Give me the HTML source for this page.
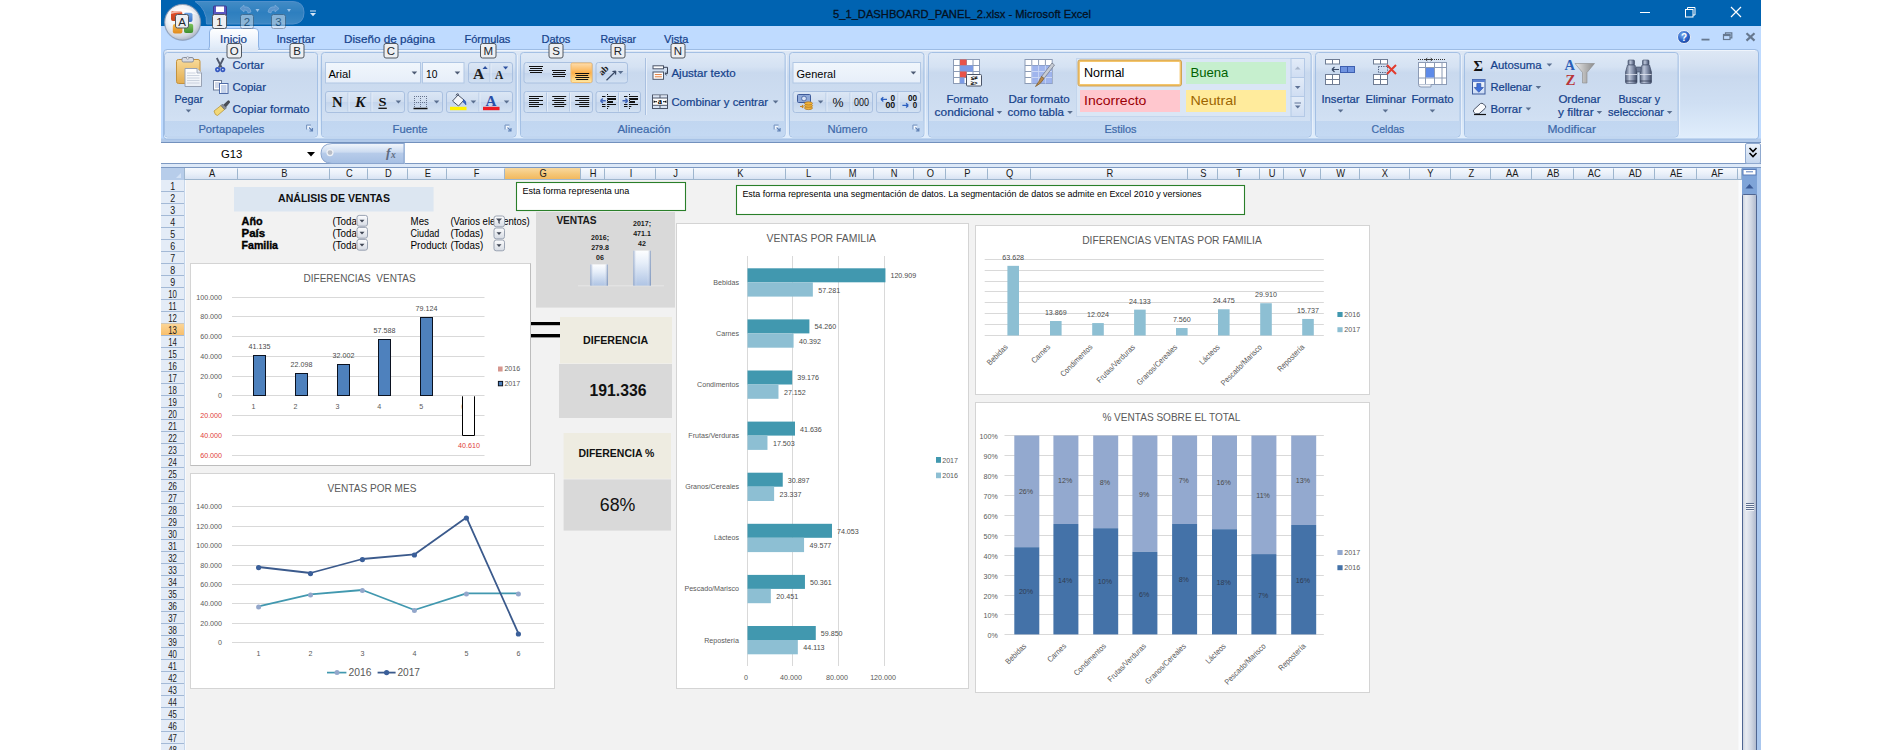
<!DOCTYPE html>
<html lang="es"><head><meta charset="utf-8"><title>5_1_DASHBOARD_PANEL_2.xlsx - Microsoft Excel</title>
<style>
html,body{margin:0;padding:0;background:#fff;}
body{width:1900px;height:750px;overflow:hidden;position:relative;}
svg{position:absolute;left:0;top:0;display:block;font-family:"Liberation Sans",sans-serif;}
text{white-space:pre;}
</style></head><body>
<svg width="1900" height="750" viewBox="0 0 1900 750">
<defs>
<linearGradient id="gTabRow" x1="0" y1="0" x2="0" y2="1"><stop offset="0" stop-color="#C3DCFB"/><stop offset="1" stop-color="#BBD6F8"/></linearGradient>
<linearGradient id="gQat" x1="0" y1="0" x2="0" y2="1"><stop offset="0" stop-color="#FFFFFF" stop-opacity="0.26"/><stop offset="0.5" stop-color="#FFFFFF" stop-opacity="0.18"/><stop offset="1" stop-color="#FFFFFF" stop-opacity="0.24"/></linearGradient>
<radialGradient id="gOrb" cx="0.42" cy="0.35" r="0.68"><stop offset="0" stop-color="#FFFFFF"/><stop offset="0.5" stop-color="#F1F3F7"/><stop offset="0.8" stop-color="#D2D7E0"/><stop offset="1" stop-color="#A9B2C2"/></radialGradient>
<linearGradient id="gLg1" x1="0" y1="0" x2="0" y2="1"><stop offset="0" stop-color="#E8502A"/><stop offset="1" stop-color="#C2441E"/></linearGradient>
<linearGradient id="gLg2" x1="0" y1="0" x2="0" y2="1"><stop offset="0" stop-color="#F6B84A"/><stop offset="1" stop-color="#E08A1E"/></linearGradient>
<linearGradient id="gLg3" x1="0" y1="0" x2="0" y2="1"><stop offset="0" stop-color="#7CC35A"/><stop offset="1" stop-color="#3F8F2E"/></linearGradient>
<linearGradient id="gLg4" x1="0" y1="0" x2="0" y2="1"><stop offset="0" stop-color="#6FA8E8"/><stop offset="1" stop-color="#3A6FC4"/></linearGradient>
<linearGradient id="gTabAct" x1="0" y1="0" x2="0" y2="1"><stop offset="0" stop-color="#FFFFFF"/><stop offset="0.5" stop-color="#EEF4FC"/><stop offset="1" stop-color="#DCE8F7"/></linearGradient>
<radialGradient id="gHelp" cx="0.4" cy="0.35" r="0.7"><stop offset="0" stop-color="#7FB2F0"/><stop offset="0.6" stop-color="#2A62C8"/><stop offset="1" stop-color="#1B3F94"/></radialGradient>
<linearGradient id="gFx" x1="0" y1="0" x2="0" y2="1"><stop offset="0" stop-color="#F3F7FC"/><stop offset="0.42" stop-color="#CDDCF1"/><stop offset="0.5" stop-color="#B6CBE9"/><stop offset="1" stop-color="#A6BFE3"/></linearGradient>
<linearGradient id="gBtn" x1="0" y1="0" x2="0" y2="1"><stop offset="0" stop-color="#EDF3FB"/><stop offset="1" stop-color="#C4D6EE"/></linearGradient>
<linearGradient id="gRib" x1="0" y1="0" x2="0" y2="1"><stop offset="0" stop-color="#DEE8F5"/><stop offset="0.14" stop-color="#D6E2F2"/><stop offset="0.3" stop-color="#C9D9EE"/><stop offset="0.6" stop-color="#CFDFF3"/><stop offset="1" stop-color="#E1EEFC"/></linearGradient>
<linearGradient id="gGrp" x1="0" y1="0" x2="0" y2="1"><stop offset="0" stop-color="#DFE9F6"/><stop offset="0.17" stop-color="#D5E2F3"/><stop offset="0.24" stop-color="#C9D9EE"/><stop offset="0.75" stop-color="#D0DFF2"/><stop offset="1" stop-color="#D8E6F7"/></linearGradient>
<linearGradient id="gGrpLbl" x1="0" y1="0" x2="0" y2="1"><stop offset="0" stop-color="#C1D6F0"/><stop offset="1" stop-color="#C4D9F3"/></linearGradient>
<linearGradient id="gClip" x1="0" y1="0" x2="0" y2="1"><stop offset="0" stop-color="#F8DA98"/><stop offset="1" stop-color="#E3AD50"/></linearGradient>
<linearGradient id="gPaper" x1="0" y1="0" x2="0" y2="1"><stop offset="0" stop-color="#FFFFFF"/><stop offset="1" stop-color="#E9EEF6"/></linearGradient>
<linearGradient id="gBox" x1="0" y1="0" x2="0" y2="1"><stop offset="0" stop-color="#F1F6FC"/><stop offset="1" stop-color="#E6EEF9"/></linearGradient>
<linearGradient id="gBtnRow" x1="0" y1="0" x2="0" y2="1"><stop offset="0" stop-color="#DCE7F5"/><stop offset="0.5" stop-color="#CFDDF0"/><stop offset="0.52" stop-color="#C4D5EC"/><stop offset="1" stop-color="#D4E2F3"/></linearGradient>
<linearGradient id="gOrange" x1="0" y1="0" x2="0" y2="1"><stop offset="0" stop-color="#FDDDAE"/><stop offset="0.35" stop-color="#FCBE6A"/><stop offset="0.5" stop-color="#FBAE4A"/><stop offset="0.8" stop-color="#FDD27E"/><stop offset="1" stop-color="#FEE9A6"/></linearGradient>
<linearGradient id="gScr" x1="0" y1="0" x2="0" y2="1"><stop offset="0" stop-color="#E3ECF8"/><stop offset="1" stop-color="#CFDDF2"/></linearGradient>
<linearGradient id="gFill" x1="0" y1="0" x2="0" y2="1"><stop offset="0" stop-color="#FFFFFF"/><stop offset="1" stop-color="#C9DAF5"/></linearGradient>
<linearGradient id="gFunnel" x1="0" y1="0" x2="1" y2="0"><stop offset="0" stop-color="#E8E8E8"/><stop offset="0.5" stop-color="#B8B8B8"/><stop offset="1" stop-color="#8C8C8C"/></linearGradient>
<linearGradient id="gBino" x1="0" y1="0" x2="1" y2="0"><stop offset="0" stop-color="#55627C"/><stop offset="0.35" stop-color="#BAC4D8"/><stop offset="0.6" stop-color="#8C98B2"/><stop offset="1" stop-color="#3E4A64"/></linearGradient>
<linearGradient id="gColH" x1="0" y1="0" x2="0" y2="1"><stop offset="0" stop-color="#F7FAFE"/><stop offset="0.5" stop-color="#E9F0F9"/><stop offset="1" stop-color="#D5E1F2"/></linearGradient>
<linearGradient id="gColSel" x1="0" y1="0" x2="0" y2="1"><stop offset="0" stop-color="#F9D99F"/><stop offset="0.5" stop-color="#F5C778"/><stop offset="1" stop-color="#F1B65A"/></linearGradient>
<linearGradient id="gRowSel" x1="0" y1="0" x2="0" y2="1"><stop offset="0" stop-color="#FBD597"/><stop offset="1" stop-color="#F8BE6A"/></linearGradient>
<linearGradient id="gThumb" x1="0" y1="0" x2="1" y2="0"><stop offset="0" stop-color="#C9D0DC"/><stop offset="0.25" stop-color="#E9ECF2"/><stop offset="0.6" stop-color="#D3D9E5"/><stop offset="1" stop-color="#AEB8CC"/></linearGradient>
<linearGradient id="gPv" x1="0" y1="0" x2="0" y2="1"><stop offset="0" stop-color="#FDFDFE"/><stop offset="1" stop-color="#D5DAE3"/></linearGradient>
<linearGradient id="gMini" x1="0" y1="0" x2="0" y2="1"><stop offset="0" stop-color="#FDFEFF"/><stop offset="0.35" stop-color="#E6EEF9"/><stop offset="1" stop-color="#AFC4E4"/></linearGradient>
<linearGradient id="gMiniH" x1="0" y1="0" x2="1" y2="0"><stop offset="0" stop-color="#6F8AB8" stop-opacity="0.7"/><stop offset="0.2" stop-color="#FFFFFF" stop-opacity="0"/><stop offset="0.78" stop-color="#FFFFFF" stop-opacity="0"/><stop offset="1" stop-color="#5F7AA8" stop-opacity="0.75"/></linearGradient>
</defs>
<g id="titlebar">
<rect x="161" y="0" width="1600" height="26" fill="#0063B1"/>
<rect x="161" y="26" width="1600" height="24" fill="#BFDBFF"/>
<path d="M195 1.5 H293 Q304 2 304 12.5 Q304 23.5 293 24 H206.5 A24 24 0 0 0 195 1.5 Z" fill="url(#gQat)" stroke="#4F8FCB" stroke-width="1"/>
<circle cx="182.6" cy="22.4" r="18.6" fill="#7F98BE" opacity="0.5"/>
<circle cx="182.6" cy="22.3" r="17.8" fill="url(#gOrb)" stroke="#8C99AE" stroke-width="0.8"/>
<rect x="171" y="11" width="11.3" height="10" fill="url(#gLg1)" rx="2"/>
<rect x="184" y="12.5" width="8.5" height="9.5" fill="url(#gLg4)" rx="2"/>
<rect x="172.8" y="24" width="9.6" height="9.6" fill="url(#gLg2)" rx="2"/>
<rect x="184" y="23.7" width="9.2" height="9.2" fill="url(#gLg3)" rx="2"/>
<path d="M167 15 Q182.6 3 198 15 Q182.6 9.5 167 15 Z" fill="#FFFFFF" opacity="0.6"/>
<rect x="213.5" y="6" width="13" height="10" fill="#5C58C2" stroke="#3D3A8C" stroke-width="1" rx="1"/>
<rect x="216" y="6.5" width="8" height="5.5" fill="#FFFFFF"/>
<path d="M251 12 Q250 6 244 7 L244 5 L240 8.5 L244 12 L244 10 Q248 9.5 248 13 Z" fill="#5D95CC" stroke="#86B3DE" stroke-width="0.6"/>
<path d="M255.5 9 l2 3 l2 -3 Z" fill="#9CC3E8"/>
<path d="M268 12 Q269 6 275 7 L275 5 L279 8.5 L275 12 L275 10 Q271 9.5 271 13 Z" fill="#5D95CC" stroke="#86B3DE" stroke-width="0.6"/>
<path d="M287 9 l2 3 l2 -3 Z" fill="#9CC3E8"/>
<line x1="310" y1="11" x2="316" y2="11" stroke="#D7E6F6" stroke-width="1"/>
<path d="M310 13 h6 l-3 3.2 Z" fill="#D7E6F6"/>
<text x="962" y="18.22" font-size="11.8" fill="#04101E" text-anchor="middle" textLength="258" lengthAdjust="spacingAndGlyphs" stroke="#04101E" stroke-width="0.3">5_1_DASHBOARD_PANEL_2.xlsx - Microsoft Excel</text>
<line x1="1640" y1="12.5" x2="1650" y2="12.5" stroke="#FFFFFF" stroke-width="1"/>
<rect x="1685.5" y="9.5" width="7.5" height="7.5" fill="none" stroke="#FFFFFF" stroke-width="1"/>
<path d="M1687.5 9.5 V7.5 H1695 V15 H1693" fill="none" stroke="#FFFFFF" stroke-width="1"/>
<path d="M1731 7 L1741 17 M1741 7 L1731 17" fill="none" stroke="#FFFFFF" stroke-width="1.2"/>
</g>
<g id="tabs">
<path d="M207 50 Q209.5 49.5 209.5 46 V32 Q209.5 28.5 213 28.5 H255 Q258.5 28.5 258.5 32 V46 Q258.5 49.5 261 50 Z" fill="url(#gTabAct)" stroke="#8DB2E3" stroke-width="1"/>
<text x="220" y="43.08" font-size="11.4" fill="#15428B" textLength="27" lengthAdjust="spacingAndGlyphs" stroke="#15428B" stroke-width="0.22">Inicio</text>
<text x="276.4" y="43.08" font-size="11.4" fill="#15428B" textLength="38.6" lengthAdjust="spacingAndGlyphs" stroke="#15428B" stroke-width="0.22">Insertar</text>
<text x="344" y="43.08" font-size="11.4" fill="#15428B" textLength="91" lengthAdjust="spacingAndGlyphs" stroke="#15428B" stroke-width="0.22">Diseño de página</text>
<text x="464.4" y="43.08" font-size="11.4" fill="#15428B" textLength="46" lengthAdjust="spacingAndGlyphs" stroke="#15428B" stroke-width="0.22">Fórmulas</text>
<text x="541.4" y="43.08" font-size="11.4" fill="#15428B" textLength="29" lengthAdjust="spacingAndGlyphs" stroke="#15428B" stroke-width="0.22">Datos</text>
<text x="600.4" y="43.08" font-size="11.4" fill="#15428B" textLength="35.6" lengthAdjust="spacingAndGlyphs" stroke="#15428B" stroke-width="0.22">Revisar</text>
<text x="664" y="43.08" font-size="11.4" fill="#15428B" textLength="24.4" lengthAdjust="spacingAndGlyphs" stroke="#15428B" stroke-width="0.22">Vista</text>
<circle cx="1684" cy="37" r="6.5" fill="url(#gHelp)" stroke="#E8F0FA" stroke-width="1"/>
<text x="1684" y="40.78" font-size="10" fill="#FFFFFF" text-anchor="middle" font-weight="bold">?</text>
<line x1="1701.5" y1="39.6" x2="1709.5" y2="39.6" stroke="#66788F" stroke-width="1.8"/>
<rect x="1723.5" y="34.5" width="6.5" height="5" fill="none" stroke="#66788F" stroke-width="1.2"/>
<path d="M1725.5 34.5 V32.8 H1731.8 V37.8 H1730" fill="none" stroke="#66788F" stroke-width="1.2"/>
<line x1="1723" y1="35.3" x2="1730.5" y2="35.3" stroke="#66788F" stroke-width="1.6"/>
<path d="M1746.5 33.3 L1754.5 40.6 M1754.5 33.3 L1746.5 40.6" fill="none" stroke="#66788F" stroke-width="2.2"/>
</g>
<g id="formulabar">
<rect x="161" y="143" width="1600" height="25" fill="#C4DAF5"/>
<rect x="161" y="143" width="1600" height="21" fill="#FFFFFF"/>
<line x1="161" y1="142.5" x2="1761" y2="142.5" stroke="#7391BD" stroke-width="1"/>
<line x1="161" y1="163.5" x2="1761" y2="163.5" stroke="#7D99C2" stroke-width="1"/>
<rect x="161" y="164" width="1600" height="4" fill="#DDE9F8"/>
<line x1="161" y1="167.5" x2="1761" y2="167.5" stroke="#7D99C2" stroke-width="1"/>
<text x="221" y="157.58" font-size="11.4" fill="#000" textLength="21.4" lengthAdjust="spacingAndGlyphs">G13</text>
<path d="M307 152 h8 l-4 4.5 Z" fill="#000"/>
<path d="M404 143.5 H332 Q321 144 321 153.5 Q321 163 332 163.5 H404 Z" fill="url(#gFx)" stroke="#8AA5CE" stroke-width="1"/>
<line x1="404.5" y1="143" x2="404.5" y2="164" stroke="#9FB8DA" stroke-width="1"/>
<circle cx="330" cy="152.6" r="3" fill="#B9BEC8" stroke="#EEF1F6" stroke-width="1.2"/>
<text x="386" y="157" font-size="13.5" fill="#5F6B80" font-weight="bold" font-style="italic" font-family="'Liberation Serif', serif">f</text>
<text x="391" y="158" font-size="9.5" fill="#5F6B80" font-weight="bold" font-style="italic" font-family="'Liberation Serif', serif">x</text>
<rect x="1745.5" y="143.5" width="15" height="20" fill="url(#gBtn)" stroke="#8FA9CF" stroke-width="1" rx="1.5"/>
<path d="M1749.5 148 l3.5 3.5 l3.5 -3.5 M1749.5 153 l3.5 3.5 l3.5 -3.5" fill="none" stroke="#000" stroke-width="1.6"/>
</g>
<g id="ribbon">
<rect x="161" y="50" width="1600" height="89" fill="#BFDBFF"/>
<rect x="161" y="138.5" width="1600" height="3.5" fill="#B1C9E9"/>
<path d="M163.5 136 V53 Q163.5 49.5 167 49.5 H1755 Q1758.5 49.5 1758.5 53 V136 Q1758.5 139 1755.5 139 H166.5 Q163.5 139 163.5 136 Z" fill="url(#gRib)" stroke="#9DBCE4" stroke-width="1"/>
<line x1="167" y1="50.5" x2="1755" y2="50.5" stroke="#EEF4FC" stroke-width="1"/>
<rect x="210" y="48.5" width="48" height="2.5" fill="#DEE8F5"/>
<rect x="164.5" y="52.5" width="153" height="84.5" fill="url(#gGrp)" stroke="#A4C0E4" stroke-width="1" rx="3"/>
<path d="M165 121 H317 V134 Q317 136.5 314.5 136.5 H167.5 Q165 136.5 165 134 Z" fill="url(#gGrpLbl)"/>
<line x1="319" y1="55" x2="319" y2="135" stroke="#E9F1FB" stroke-width="1"/>
<text x="198.4" y="132.88" font-size="11.4" fill="#3E6AAA" textLength="66" lengthAdjust="spacingAndGlyphs" stroke="#3E6AAA" stroke-width="0.22">Portapapeles</text>
<path d="M306.5 129.5 V125 H311" fill="none" stroke="#7A96C0" stroke-width="1"/>
<rect x="307.5" y="126" width="3" height="3" fill="#F4F8FD"/>
<path d="M309 127.5 l3 3 M312.5 128 V131 H309.5" fill="none" stroke="#5F80B4" stroke-width="1.1"/>
<rect x="321.5" y="52.5" width="194.5" height="84.5" fill="url(#gGrp)" stroke="#A4C0E4" stroke-width="1" rx="3"/>
<path d="M322 121 H515.5 V134 Q515.5 136.5 513 136.5 H324.5 Q322 136.5 322 134 Z" fill="url(#gGrpLbl)"/>
<line x1="517.5" y1="55" x2="517.5" y2="135" stroke="#E9F1FB" stroke-width="1"/>
<text x="392.6" y="132.88" font-size="11.4" fill="#3E6AAA" textLength="35" lengthAdjust="spacingAndGlyphs" stroke="#3E6AAA" stroke-width="0.22">Fuente</text>
<path d="M505 129.5 V125 H509.5" fill="none" stroke="#7A96C0" stroke-width="1"/>
<rect x="506" y="126" width="3" height="3" fill="#F4F8FD"/>
<path d="M507.5 127.5 l3 3 M511 128 V131 H508" fill="none" stroke="#5F80B4" stroke-width="1.1"/>
<rect x="520.5" y="52.5" width="264.6" height="84.5" fill="url(#gGrp)" stroke="#A4C0E4" stroke-width="1" rx="3"/>
<path d="M521 121 H784.6 V134 Q784.6 136.5 782.1 136.5 H523.5 Q521 136.5 521 134 Z" fill="url(#gGrpLbl)"/>
<line x1="786.6" y1="55" x2="786.6" y2="135" stroke="#E9F1FB" stroke-width="1"/>
<text x="617.4" y="132.88" font-size="11.4" fill="#3E6AAA" textLength="53.2" lengthAdjust="spacingAndGlyphs" stroke="#3E6AAA" stroke-width="0.22">Alineación</text>
<path d="M774.1 129.5 V125 H778.6" fill="none" stroke="#7A96C0" stroke-width="1"/>
<rect x="775.1" y="126" width="3" height="3" fill="#F4F8FD"/>
<path d="M776.6 127.5 l3 3 M780.1 128 V131 H777.1" fill="none" stroke="#5F80B4" stroke-width="1.1"/>
<rect x="789.5" y="52.5" width="134.4" height="84.5" fill="url(#gGrp)" stroke="#A4C0E4" stroke-width="1" rx="3"/>
<path d="M790 121 H923.4 V134 Q923.4 136.5 920.9 136.5 H792.5 Q790 136.5 790 134 Z" fill="url(#gGrpLbl)"/>
<line x1="925.4" y1="55" x2="925.4" y2="135" stroke="#E9F1FB" stroke-width="1"/>
<text x="827.4" y="132.88" font-size="11.4" fill="#3E6AAA" textLength="40" lengthAdjust="spacingAndGlyphs" stroke="#3E6AAA" stroke-width="0.22">Número</text>
<path d="M912.9 129.5 V125 H917.4" fill="none" stroke="#7A96C0" stroke-width="1"/>
<rect x="913.9" y="126" width="3" height="3" fill="#F4F8FD"/>
<path d="M915.4 127.5 l3 3 M918.9 128 V131 H915.9" fill="none" stroke="#5F80B4" stroke-width="1.1"/>
<rect x="928.5" y="52.5" width="382.6" height="84.5" fill="url(#gGrp)" stroke="#A4C0E4" stroke-width="1" rx="3"/>
<path d="M929 121 H1310.6 V134 Q1310.6 136.5 1308.1 136.5 H931.5 Q929 136.5 929 134 Z" fill="url(#gGrpLbl)"/>
<line x1="1312.6" y1="55" x2="1312.6" y2="135" stroke="#E9F1FB" stroke-width="1"/>
<text x="1104.4" y="132.88" font-size="11.4" fill="#3E6AAA" textLength="32.2" lengthAdjust="spacingAndGlyphs" stroke="#3E6AAA" stroke-width="0.22">Estilos</text>
<rect x="1315.5" y="52.5" width="144.6" height="84.5" fill="url(#gGrp)" stroke="#A4C0E4" stroke-width="1" rx="3"/>
<path d="M1316 121 H1459.6 V134 Q1459.6 136.5 1457.1 136.5 H1318.5 Q1316 136.5 1316 134 Z" fill="url(#gGrpLbl)"/>
<line x1="1461.6" y1="55" x2="1461.6" y2="135" stroke="#E9F1FB" stroke-width="1"/>
<text x="1371.6" y="132.88" font-size="11.4" fill="#3E6AAA" textLength="32.8" lengthAdjust="spacingAndGlyphs" stroke="#3E6AAA" stroke-width="0.22">Celdas</text>
<rect x="1464.5" y="52.5" width="213.6" height="84.5" fill="url(#gGrp)" stroke="#A4C0E4" stroke-width="1" rx="3"/>
<path d="M1465 121 H1677.6 V134 Q1677.6 136.5 1675.1 136.5 H1467.5 Q1465 136.5 1465 134 Z" fill="url(#gGrpLbl)"/>
<line x1="1679.6" y1="55" x2="1679.6" y2="135" stroke="#E9F1FB" stroke-width="1"/>
<text x="1547.4" y="132.88" font-size="11.4" fill="#3E6AAA" textLength="48.6" lengthAdjust="spacingAndGlyphs" stroke="#3E6AAA" stroke-width="0.22">Modificar</text>
<rect x="176.5" y="59.5" width="23.5" height="24" fill="url(#gClip)" stroke="#C4923E" stroke-width="1" rx="2"/>
<rect x="182" y="57.5" width="11.5" height="4.5" fill="#D9DCE3" stroke="#8A8F9C" stroke-width="1" rx="1.5"/>
<circle cx="187.7" cy="58" r="1.3" fill="#F4F4F6" stroke="#8A8F9C" stroke-width="0.7"/>
<path d="M185 68.5 H197 L201.5 73 V86.5 H185 Z" fill="url(#gPaper)" stroke="#98A2B4" stroke-width="1"/>
<path d="M197 68.5 V73 H201.5" fill="#E2E7F0" stroke="#98A2B4" stroke-width="0.8"/>
<line x1="187" y1="73" x2="195.5" y2="73" stroke="#C2CAD8" stroke-width="0.8"/>
<line x1="187" y1="75.5" x2="199.5" y2="75.5" stroke="#C2CAD8" stroke-width="0.8"/>
<line x1="187" y1="78" x2="199.5" y2="78" stroke="#C2CAD8" stroke-width="0.8"/>
<line x1="187" y1="80.5" x2="199.5" y2="80.5" stroke="#C2CAD8" stroke-width="0.8"/>
<line x1="187" y1="83" x2="199.5" y2="83" stroke="#C2CAD8" stroke-width="0.8"/>
<text x="174.4" y="102.98" font-size="11.4" fill="#15428B" textLength="28.6" lengthAdjust="spacingAndGlyphs" stroke="#15428B" stroke-width="0.22">Pegar</text>
<path d="M185.7 109.6 h5.6 l-2.8 3 Z" fill="#5A6F90"/>
<path d="M216.8 58 L221.6 67.5 M223.6 58 L218.8 67.5" fill="none" stroke="#4F586C" stroke-width="1.8"/>
<circle cx="217.6" cy="69.6" r="1.7" fill="none" stroke="#3558C0" stroke-width="1.7"/>
<circle cx="222.8" cy="69.6" r="1.7" fill="none" stroke="#3558C0" stroke-width="1.7"/>
<text x="232.4" y="68.78" font-size="11.4" fill="#15428B" textLength="31.6" lengthAdjust="spacingAndGlyphs" stroke="#15428B" stroke-width="0.22">Cortar</text>
<rect x="213.5" y="80.5" width="8" height="9.5" fill="#FFFFFF" stroke="#6C7C99" stroke-width="1"/>
<line x1="215" y1="83" x2="220" y2="83" stroke="#8AA0C6" stroke-width="0.8"/>
<line x1="215" y1="85" x2="220" y2="85" stroke="#8AA0C6" stroke-width="0.8"/>
<line x1="215" y1="87" x2="220" y2="87" stroke="#8AA0C6" stroke-width="0.8"/>
<rect x="219.5" y="83.5" width="8.5" height="10" fill="#FFFFFF" stroke="#4F6CA8" stroke-width="1"/>
<line x1="221" y1="86" x2="226.5" y2="86" stroke="#6F8FCB" stroke-width="0.8"/>
<line x1="221" y1="88" x2="226.5" y2="88" stroke="#6F8FCB" stroke-width="0.8"/>
<line x1="221" y1="90" x2="226.5" y2="90" stroke="#6F8FCB" stroke-width="0.8"/>
<line x1="221" y1="92" x2="226.5" y2="92" stroke="#6F8FCB" stroke-width="0.8"/>
<text x="232.4" y="90.98" font-size="11.4" fill="#15428B" textLength="33.6" lengthAdjust="spacingAndGlyphs" stroke="#15428B" stroke-width="0.22">Copiar</text>
<path d="M214 111 L221 105.5 L224.5 109.5 L217.5 115.5 Q215 115.5 214 111 Z" fill="#F2D878" stroke="#B8963C" stroke-width="0.8"/>
<path d="M221 105.5 L222.5 104 L226.5 108 L224.5 109.5 Z" fill="#8B8F98" stroke="#60646E" stroke-width="0.6"/>
<path d="M223.8 104.8 L228 100.8 Q229.8 100.2 229.5 102.5 L226 106.8 Z" fill="#4A4E58" stroke="#2E3138" stroke-width="0.6"/>
<text x="232.4" y="112.78" font-size="11.4" fill="#15428B" textLength="77.2" lengthAdjust="spacingAndGlyphs" stroke="#15428B" stroke-width="0.22">Copiar formato</text>
<rect x="325.5" y="62.5" width="95" height="20.5" fill="url(#gBox)" stroke="#B1C7E4" stroke-width="1"/>
<text x="328.4" y="77.68" font-size="11.4" fill="#000" textLength="22.4" lengthAdjust="spacingAndGlyphs">Arial</text>
<path d="M411.6 71.6 h5.6 l-2.8 3 Z" fill="#4D5B74"/>
<rect x="422.5" y="62.5" width="41.5" height="20.5" fill="url(#gBox)" stroke="#B1C7E4" stroke-width="1"/>
<text x="426" y="77.68" font-size="11.4" fill="#000" textLength="11.4" lengthAdjust="spacingAndGlyphs">10</text>
<path d="M454.6 71.6 h5.6 l-2.8 3 Z" fill="#4D5B74"/>
<rect x="468.5" y="62.5" width="44" height="20.5" fill="url(#gBtnRow)" stroke="#A9C0E0" stroke-width="1" rx="2.5"/>
<line x1="490" y1="63.5" x2="490" y2="82" stroke="#B4C8E4" stroke-width="1"/>
<line x1="491" y1="63.5" x2="491" y2="82" stroke="#E3ECF8" stroke-width="1"/>
<text x="473" y="78.8" font-size="15.5" fill="#1E1E1E" font-weight="bold" font-family="'Liberation Serif', serif">A</text>
<path d="M482.5 69 l2.6 -3 l2.6 3 Z" fill="#2B4F9E"/>
<text x="495" y="78.8" font-size="11.5" fill="#1E1E1E" font-weight="bold" font-family="'Liberation Serif', serif">A</text>
<path d="M503 66.5 h5.2 l-2.6 3 Z" fill="#2B4F9E"/>
<rect x="325.5" y="91.5" width="79" height="21" fill="url(#gBtnRow)" stroke="#A9C0E0" stroke-width="1" rx="2.5"/>
<line x1="348" y1="92.5" x2="348" y2="111.5" stroke="#B4C8E4" stroke-width="1"/>
<line x1="349" y1="92.5" x2="349" y2="111.5" stroke="#E3ECF8" stroke-width="1"/>
<line x1="371" y1="92.5" x2="371" y2="111.5" stroke="#B4C8E4" stroke-width="1"/>
<line x1="372" y1="92.5" x2="372" y2="111.5" stroke="#E3ECF8" stroke-width="1"/>
<text x="332" y="106.5" font-size="14.5" fill="#111" font-weight="bold" font-family="'Liberation Serif', serif" textLength="10.6" lengthAdjust="spacingAndGlyphs">N</text>
<text x="355" y="106.5" font-size="14.5" fill="#111" font-weight="bold" font-style="italic" font-family="'Liberation Serif', serif" textLength="10.5" lengthAdjust="spacingAndGlyphs">K</text>
<text x="378.6" y="106" font-size="13.5" fill="#111" font-weight="bold" font-family="'Liberation Serif', serif" textLength="8" lengthAdjust="spacingAndGlyphs">S</text>
<line x1="378.4" y1="108.3" x2="386.8" y2="108.3" stroke="#111" stroke-width="1.3"/>
<path d="M395.6 100.6 h5.6 l-2.8 3 Z" fill="#5A6F90"/>
<rect x="408" y="91.5" width="34.5" height="21" fill="url(#gBtnRow)" stroke="#A9C0E0" stroke-width="1" rx="2.5"/>
<line x1="414.5" y1="96" x2="414.5" y2="108" stroke="#66738C" stroke-width="1" stroke-dasharray="1 1"/>
<line x1="420.5" y1="96" x2="420.5" y2="108" stroke="#66738C" stroke-width="1" stroke-dasharray="1 1"/>
<line x1="426.5" y1="96" x2="426.5" y2="108" stroke="#66738C" stroke-width="1" stroke-dasharray="1 1"/>
<line x1="414" y1="96.5" x2="427" y2="96.5" stroke="#66738C" stroke-width="1" stroke-dasharray="1 1"/>
<line x1="414" y1="102.5" x2="427" y2="102.5" stroke="#66738C" stroke-width="1" stroke-dasharray="1 1"/>
<line x1="413.5" y1="108.5" x2="427.5" y2="108.5" stroke="#111" stroke-width="1.5"/>
<path d="M433.8 100.6 h5.6 l-2.8 3 Z" fill="#5A6F90"/>
<rect x="446.5" y="91.5" width="66" height="21" fill="url(#gBtnRow)" stroke="#A9C0E0" stroke-width="1" rx="2.5"/>
<line x1="479" y1="92.5" x2="479" y2="111.5" stroke="#B4C8E4" stroke-width="1"/>
<line x1="480" y1="92.5" x2="480" y2="111.5" stroke="#E3ECF8" stroke-width="1"/>
<path d="M452.5 101 L458 95 L464 100 L458.5 106 Z" fill="#F4F6FA" stroke="#4A5468" stroke-width="1"/>
<path d="M456 95.5 Q456.5 92.5 459 94.5" fill="none" stroke="#4A5468" stroke-width="1"/>
<path d="M463.5 99.5 Q466.5 100.5 466 105 Q464.5 103 463 102 Z" fill="#3465C8" stroke="#2A4FA0" stroke-width="0.5"/>
<rect x="450" y="106.8" width="16.5" height="3.4" fill="#FFF200"/>
<path d="M470.6 100.6 h5.6 l-2.8 3 Z" fill="#5A6F90"/>
<text x="485.5" y="106" font-size="15" fill="#2A4FA8" font-weight="bold" font-family="'Liberation Serif', serif" textLength="11" lengthAdjust="spacingAndGlyphs">A</text>
<rect x="483" y="106.8" width="16.5" height="3.4" fill="#EE1C25"/>
<path d="M503.8 100.6 h5.6 l-2.8 3 Z" fill="#5A6F90"/>
<rect x="524" y="62.5" width="68.5" height="20.5" fill="url(#gBtnRow)" stroke="#A9C0E0" stroke-width="1" rx="2.5"/>
<rect x="571" y="63" width="21" height="19.5" fill="url(#gOrange)" stroke="#F3BC6E" stroke-width="1" rx="1.5"/>
<line x1="529" y1="66.5" x2="543" y2="66.5" stroke="#111" stroke-width="1.05"/>
<line x1="530" y1="68.5" x2="542" y2="68.5" stroke="#111" stroke-width="1.05"/>
<line x1="529" y1="70.5" x2="543" y2="70.5" stroke="#111" stroke-width="1.05"/>
<line x1="530" y1="72.5" x2="542" y2="72.5" stroke="#111" stroke-width="1.05"/>
<line x1="552" y1="70.5" x2="566" y2="70.5" stroke="#111" stroke-width="1.05"/>
<line x1="553" y1="72.5" x2="565" y2="72.5" stroke="#111" stroke-width="1.05"/>
<line x1="552" y1="74.5" x2="566" y2="74.5" stroke="#111" stroke-width="1.05"/>
<line x1="553" y1="76.5" x2="565" y2="76.5" stroke="#111" stroke-width="1.05"/>
<line x1="575.2" y1="73.5" x2="589.2" y2="73.5" stroke="#111" stroke-width="1.05"/>
<line x1="576.2" y1="75.5" x2="588.2" y2="75.5" stroke="#111" stroke-width="1.05"/>
<line x1="575.2" y1="77.5" x2="589.2" y2="77.5" stroke="#111" stroke-width="1.05"/>
<line x1="576.2" y1="79.5" x2="588.2" y2="79.5" stroke="#111" stroke-width="1.05"/>
<rect x="596" y="62.5" width="31.5" height="20.5" fill="url(#gBtnRow)" stroke="#A9C0E0" stroke-width="1" rx="2.5"/>
<text x="602.2" y="76" font-size="9.5" fill="#222" font-weight="bold" font-family="'Liberation Serif', serif" transform="rotate(-45 602.2 76)">ab</text>
<path d="M606.5 80.2 L615.5 71.5 M615.8 71.2 l-3.4 0.3 M615.8 71.2 l-0.3 3.4" fill="none" stroke="#3A4A66" stroke-width="1.2"/>
<path d="M617.8 71.1 h5.6 l-2.8 3 Z" fill="#5A6F90"/>
<rect x="524" y="91.5" width="68.5" height="21" fill="url(#gBtnRow)" stroke="#A9C0E0" stroke-width="1" rx="2.5"/>
<line x1="546.5" y1="92.5" x2="546.5" y2="111.5" stroke="#B4C8E4" stroke-width="1"/>
<line x1="547.5" y1="92.5" x2="547.5" y2="111.5" stroke="#E3ECF8" stroke-width="1"/>
<line x1="569.5" y1="92.5" x2="569.5" y2="111.5" stroke="#B4C8E4" stroke-width="1"/>
<line x1="570.5" y1="92.5" x2="570.5" y2="111.5" stroke="#E3ECF8" stroke-width="1"/>
<line x1="529" y1="96.5" x2="543" y2="96.5" stroke="#111" stroke-width="1.05"/>
<line x1="529" y1="98.5" x2="539" y2="98.5" stroke="#111" stroke-width="1.05"/>
<line x1="529" y1="100.5" x2="543" y2="100.5" stroke="#111" stroke-width="1.05"/>
<line x1="529" y1="102.5" x2="539" y2="102.5" stroke="#111" stroke-width="1.05"/>
<line x1="529" y1="104.5" x2="543" y2="104.5" stroke="#111" stroke-width="1.05"/>
<line x1="529" y1="106.5" x2="539" y2="106.5" stroke="#111" stroke-width="1.05"/>
<line x1="552.2" y1="96.5" x2="566.2" y2="96.5" stroke="#111" stroke-width="1.05"/>
<line x1="554.2" y1="98.5" x2="564.2" y2="98.5" stroke="#111" stroke-width="1.05"/>
<line x1="552.2" y1="100.5" x2="566.2" y2="100.5" stroke="#111" stroke-width="1.05"/>
<line x1="554.2" y1="102.5" x2="564.2" y2="102.5" stroke="#111" stroke-width="1.05"/>
<line x1="552.2" y1="104.5" x2="566.2" y2="104.5" stroke="#111" stroke-width="1.05"/>
<line x1="554.2" y1="106.5" x2="564.2" y2="106.5" stroke="#111" stroke-width="1.05"/>
<line x1="575.2" y1="96.5" x2="589.2" y2="96.5" stroke="#111" stroke-width="1.05"/>
<line x1="579.2" y1="98.5" x2="589.2" y2="98.5" stroke="#111" stroke-width="1.05"/>
<line x1="575.2" y1="100.5" x2="589.2" y2="100.5" stroke="#111" stroke-width="1.05"/>
<line x1="579.2" y1="102.5" x2="589.2" y2="102.5" stroke="#111" stroke-width="1.05"/>
<line x1="575.2" y1="104.5" x2="589.2" y2="104.5" stroke="#111" stroke-width="1.05"/>
<line x1="579.2" y1="106.5" x2="589.2" y2="106.5" stroke="#111" stroke-width="1.05"/>
<rect x="596" y="91.5" width="44.5" height="21" fill="url(#gBtnRow)" stroke="#A9C0E0" stroke-width="1" rx="2.5"/>
<line x1="618.5" y1="92.5" x2="618.5" y2="111.5" stroke="#B4C8E4" stroke-width="1"/>
<line x1="619.5" y1="92.5" x2="619.5" y2="111.5" stroke="#E3ECF8" stroke-width="1"/>
<line x1="607.5" y1="96.5" x2="616" y2="96.5" stroke="#111" stroke-width="1.05"/>
<rect x="607.5" y="98" width="8.5" height="2" fill="#111"/>
<rect x="607.5" y="101" width="5.5" height="2" fill="#111"/>
<line x1="607.5" y1="104.5" x2="616" y2="104.5" stroke="#111" stroke-width="1.05"/>
<line x1="607.5" y1="106.5" x2="609.3" y2="106.5" stroke="#111" stroke-width="1.05"/>
<line x1="602" y1="96.5" x2="605.5" y2="96.5" stroke="#111" stroke-width="1.05"/>
<line x1="602" y1="104.5" x2="605.5" y2="104.5" stroke="#111" stroke-width="1.05"/>
<line x1="602" y1="106.5" x2="605.5" y2="106.5" stroke="#111" stroke-width="1.05"/>
<line x1="607.5" y1="94" x2="607.5" y2="109" stroke="#111" stroke-width="1" stroke-dasharray="1 1"/>
<path d="M605.7 100.7 h-5.2 m0 0 l2.3 -2.3 m-2.3 2.3 l2.3 2.3" fill="none" stroke="#3E63B8" stroke-width="1.4"/>
<line x1="629.5" y1="96.5" x2="638" y2="96.5" stroke="#111" stroke-width="1.05"/>
<rect x="629.5" y="98" width="8.5" height="2" fill="#111"/>
<rect x="629.5" y="101" width="5.5" height="2" fill="#111"/>
<line x1="629.5" y1="104.5" x2="638" y2="104.5" stroke="#111" stroke-width="1.05"/>
<line x1="629.5" y1="106.5" x2="631.3" y2="106.5" stroke="#111" stroke-width="1.05"/>
<line x1="624" y1="96.5" x2="627.5" y2="96.5" stroke="#111" stroke-width="1.05"/>
<line x1="624" y1="104.5" x2="627.5" y2="104.5" stroke="#111" stroke-width="1.05"/>
<line x1="624" y1="106.5" x2="627.5" y2="106.5" stroke="#111" stroke-width="1.05"/>
<line x1="629.5" y1="94" x2="629.5" y2="109" stroke="#111" stroke-width="1" stroke-dasharray="1 1"/>
<path d="M622.5 100.7 h5.2 m0 0 l-2.3 -2.3 m2.3 2.3 l-2.3 2.3" fill="none" stroke="#3E63B8" stroke-width="1.4"/>
<line x1="645.5" y1="58" x2="645.5" y2="115" stroke="#A9C0E0" stroke-width="1"/>
<line x1="646.5" y1="58" x2="646.5" y2="115" stroke="#E6EEF9" stroke-width="1"/>
<rect x="653" y="65.8" width="10.5" height="3" fill="#FFFFFF" stroke="#4A5468" stroke-width="1"/>
<path d="M663.5 67.3 H667.5 V73.6 H665.2 M666.6 72 l-1.7 1.6 l1.7 1.6" fill="none" stroke="#3A4458" stroke-width="1"/>
<rect x="653" y="72" width="10.5" height="7.3" fill="#FFFFFF" stroke="#4A5468" stroke-width="1"/>
<line x1="654.8" y1="74.6" x2="661.8" y2="74.6" stroke="#E07A3A" stroke-width="1"/>
<line x1="654.8" y1="76.8" x2="661.8" y2="76.8" stroke="#E07A3A" stroke-width="1"/>
<text x="671.4" y="76.78" font-size="11.4" fill="#15428B" textLength="64.2" lengthAdjust="spacingAndGlyphs" stroke="#15428B" stroke-width="0.22">Ajustar texto</text>
<rect x="652.5" y="95" width="15" height="13.5" fill="#FFFFFF" stroke="#4A5468" stroke-width="1"/>
<rect x="653" y="95.5" width="14" height="2.4" fill="#D9E4F4"/>
<rect x="653" y="105.6" width="14" height="2.4" fill="#D9E4F4"/>
<line x1="652.5" y1="98" x2="667.5" y2="98" stroke="#4A5468" stroke-width="1"/>
<line x1="652.5" y1="105.3" x2="667.5" y2="105.3" stroke="#4A5468" stroke-width="1"/>
<line x1="660" y1="95" x2="660" y2="98" stroke="#4A5468" stroke-width="1"/>
<line x1="660" y1="105.3" x2="660" y2="108.5" stroke="#4A5468" stroke-width="1"/>
<text x="660" y="104.4" font-size="8.6" fill="#000" text-anchor="middle" font-weight="bold" font-family="'Liberation Serif', serif">a</text>
<path d="M653.6 100.3 l2.4 1.4 l-2.4 1.4 Z M666.4 100.3 l-2.4 1.4 l2.4 1.4 Z" fill="#111"/>
<line x1="655.5" y1="101.7" x2="657" y2="101.7" stroke="#111" stroke-width="1"/>
<line x1="663" y1="101.7" x2="664.5" y2="101.7" stroke="#111" stroke-width="1"/>
<text x="671.4" y="105.78" font-size="11.4" fill="#15428B" textLength="96.6" lengthAdjust="spacingAndGlyphs" stroke="#15428B" stroke-width="0.22">Combinar y centrar</text>
<path d="M772.8 100.6 h5.6 l-2.8 3 Z" fill="#5A6F90"/>
<rect x="793" y="62.5" width="127.5" height="20.5" fill="url(#gBox)" stroke="#B1C7E4" stroke-width="1"/>
<text x="796.6" y="77.68" font-size="11.4" fill="#000" textLength="39" lengthAdjust="spacingAndGlyphs">General</text>
<path d="M910.6 71.6 h5.6 l-2.8 3 Z" fill="#4D5B74"/>
<rect x="793" y="91.5" width="79.5" height="21" fill="url(#gBtnRow)" stroke="#A9C0E0" stroke-width="1" rx="2.5"/>
<line x1="826" y1="92.5" x2="826" y2="111.5" stroke="#B4C8E4" stroke-width="1"/>
<line x1="827" y1="92.5" x2="827" y2="111.5" stroke="#E3ECF8" stroke-width="1"/>
<line x1="850" y1="92.5" x2="850" y2="111.5" stroke="#B4C8E4" stroke-width="1"/>
<line x1="851" y1="92.5" x2="851" y2="111.5" stroke="#E3ECF8" stroke-width="1"/>
<rect x="797.5" y="94.5" width="13" height="8" fill="#8FA9D8" stroke="#3D5A9A" stroke-width="1" rx="1"/>
<circle cx="804" cy="98.5" r="2.4" fill="#D8E3F6" stroke="#3D5A9A" stroke-width="0.8"/>
<ellipse cx="808.5" cy="108" rx="4" ry="1.6" fill="#F1B33B" stroke="#A8701A" stroke-width="0.7"/>
<ellipse cx="808.5" cy="105.7" rx="4" ry="1.6" fill="#F1B33B" stroke="#A8701A" stroke-width="0.7"/>
<ellipse cx="808.5" cy="103.4" rx="4" ry="1.6" fill="#F1B33B" stroke="#A8701A" stroke-width="0.7"/>
<path d="M800 106.5 h3.5 m0 0 l-1.5 -1.4 m1.5 1.4 l-1.5 1.4" fill="none" stroke="#C9851E" stroke-width="1.1"/>
<path d="M817.8 100.6 h5.6 l-2.8 3 Z" fill="#5A6F90"/>
<text x="838" y="106.85" font-size="13" fill="#111" text-anchor="middle" textLength="11" lengthAdjust="spacingAndGlyphs">%</text>
<text x="861.6" y="106.44" font-size="11" fill="#111" text-anchor="middle" textLength="15" lengthAdjust="spacingAndGlyphs">000</text>
<rect x="876.5" y="91.5" width="44" height="21" fill="url(#gBtnRow)" stroke="#A9C0E0" stroke-width="1" rx="2.5"/>
<line x1="898" y1="92.5" x2="898" y2="111.5" stroke="#B4C8E4" stroke-width="1"/>
<line x1="899" y1="92.5" x2="899" y2="111.5" stroke="#E3ECF8" stroke-width="1"/>
<text x="890.6" y="101.38" font-size="8.6" fill="#111" font-weight="bold" textLength="4.6" lengthAdjust="spacingAndGlyphs">0</text>
<text x="885.4" y="108.28" font-size="8.6" fill="#111" font-weight="bold" textLength="9.8" lengthAdjust="spacingAndGlyphs">00</text>
<path d="M881 99.3 h6 m-6 0 l2.3 -2.1 m-2.3 2.1 l2.3 2.1" fill="none" stroke="#2B5FC0" stroke-width="1.3"/>
<text x="908" y="101.38" font-size="8.6" fill="#111" font-weight="bold" textLength="9.2" lengthAdjust="spacingAndGlyphs">00</text>
<text x="912.8" y="108.28" font-size="8.6" fill="#111" font-weight="bold" textLength="4.4" lengthAdjust="spacingAndGlyphs">0</text>
<path d="M902.4 105.4 h6 m0 0 l-2.3 -2.1 m2.3 2.1 l-2.3 2.1" fill="none" stroke="#2B5FC0" stroke-width="1.3"/>
<rect x="953.5" y="59.5" width="26" height="24" fill="#FFFFFF" stroke="#8C9BB5" stroke-width="1"/>
<line x1="960" y1="59.5" x2="960" y2="83.5" stroke="#8C9BB5" stroke-width="1"/>
<line x1="966.5" y1="59.5" x2="966.5" y2="83.5" stroke="#8C9BB5" stroke-width="1"/>
<line x1="973" y1="59.5" x2="973" y2="83.5" stroke="#8C9BB5" stroke-width="1"/>
<line x1="953.5" y1="65.5" x2="979.5" y2="65.5" stroke="#8C9BB5" stroke-width="1"/>
<line x1="953.5" y1="71.5" x2="979.5" y2="71.5" stroke="#8C9BB5" stroke-width="1"/>
<line x1="953.5" y1="77.5" x2="979.5" y2="77.5" stroke="#8C9BB5" stroke-width="1"/>
<rect x="960" y="59.5" width="6.5" height="6" fill="#E8524A"/>
<rect x="960" y="65.5" width="13" height="6" fill="#7C9BE6"/>
<rect x="960" y="71.5" width="6.5" height="6" fill="#E8524A"/>
<rect x="960" y="77.5" width="4.5" height="6" fill="#7C9BE6"/>
<rect x="966.5" y="74.5" width="15" height="11.5" fill="#F7F9FC" stroke="#4A5468" stroke-width="1" rx="1"/>
<text x="974.2" y="80" font-size="6" fill="#000" text-anchor="middle" font-weight="bold">≤≠</text>
<text x="974.2" y="85.3" font-size="6" fill="#000" text-anchor="middle" font-weight="bold">≥&gt;</text>
<text x="946.4" y="103.18" font-size="11.4" fill="#15428B" textLength="42" lengthAdjust="spacingAndGlyphs" stroke="#15428B" stroke-width="0.22">Formato</text>
<text x="934.6" y="115.88" font-size="11.4" fill="#15428B" textLength="59.4" lengthAdjust="spacingAndGlyphs" stroke="#15428B" stroke-width="0.22">condicional</text>
<path d="M996.6 111.1 h5.6 l-2.8 3 Z" fill="#5A6F90"/>
<rect x="1025" y="59.5" width="27.2" height="24" fill="#FFFFFF" stroke="#8C9BB5" stroke-width="1"/>
<line x1="1031.8" y1="59.5" x2="1031.8" y2="83.5" stroke="#8C9BB5" stroke-width="1"/>
<line x1="1038.6" y1="59.5" x2="1038.6" y2="83.5" stroke="#8C9BB5" stroke-width="1"/>
<line x1="1045.4" y1="59.5" x2="1045.4" y2="83.5" stroke="#8C9BB5" stroke-width="1"/>
<line x1="1025" y1="65.5" x2="1052.2" y2="65.5" stroke="#8C9BB5" stroke-width="1"/>
<line x1="1025" y1="71.5" x2="1052.2" y2="71.5" stroke="#8C9BB5" stroke-width="1"/>
<line x1="1025" y1="77.5" x2="1052.2" y2="77.5" stroke="#8C9BB5" stroke-width="1"/>
<rect x="1032" y="65.5" width="20" height="18" fill="#8FA8EA" opacity="0.85"/>
<line x1="1031.8" y1="65.5" x2="1031.8" y2="83.5" stroke="#C9D6F5" stroke-width="1"/>
<line x1="1038.6" y1="65.5" x2="1038.6" y2="83.5" stroke="#C9D6F5" stroke-width="1"/>
<line x1="1045.4" y1="65.5" x2="1045.4" y2="83.5" stroke="#C9D6F5" stroke-width="1"/>
<line x1="1032" y1="71.5" x2="1052" y2="71.5" stroke="#C9D6F5" stroke-width="1"/>
<line x1="1032" y1="77.5" x2="1052" y2="77.5" stroke="#C9D6F5" stroke-width="1"/>
<path d="M1052 63 L1054.5 65 L1044 78.5 L1041.5 76.5 Z" fill="#C8CCD4" stroke="#6C7382" stroke-width="0.7"/>
<path d="M1041.5 76.5 L1044 78.5 Q1041 84 1035.5 86.5 Q1039 81.5 1041.5 76.5 Z" fill="#B98A4A" stroke="#7A5A2E" stroke-width="0.7"/>
<text x="1008.4" y="103.18" font-size="11.4" fill="#15428B" textLength="61.2" lengthAdjust="spacingAndGlyphs" stroke="#15428B" stroke-width="0.22">Dar formato</text>
<text x="1007.6" y="115.88" font-size="11.4" fill="#15428B" textLength="56.4" lengthAdjust="spacingAndGlyphs" stroke="#15428B" stroke-width="0.22">como tabla</text>
<path d="M1067.2 111.1 h5.6 l-2.8 3 Z" fill="#5A6F90"/>
<rect x="1076.5" y="58.5" width="228" height="58" fill="#DAE6F5" stroke="#C3D5EC" stroke-width="1"/>
<rect x="1079" y="61" width="101.5" height="24" fill="#FFFFFF" stroke="#F4C56C" stroke-width="1.8" rx="1.5"/>
<rect x="1078" y="60" width="103.5" height="26" fill="none" stroke="#C9953A" stroke-width="0.8" rx="2"/>
<text x="1084" y="77.2" font-size="13.4" fill="#000" textLength="40.4" lengthAdjust="spacingAndGlyphs">Normal</text>
<rect x="1186" y="62" width="100" height="22" fill="#C6EFCE"/>
<text x="1190.4" y="77.2" font-size="13.4" fill="#006100" textLength="38" lengthAdjust="spacingAndGlyphs">Buena</text>
<rect x="1080" y="90" width="100" height="22" fill="#FFC7CE"/>
<text x="1084" y="105.2" font-size="13.4" fill="#9C0006" textLength="62.4" lengthAdjust="spacingAndGlyphs">Incorrecto</text>
<rect x="1186" y="90" width="100" height="22" fill="#FFEB9C"/>
<text x="1190.4" y="105.2" font-size="13.4" fill="#9C6500" textLength="46" lengthAdjust="spacingAndGlyphs">Neutral</text>
<rect x="1291" y="58.5" width="13.5" height="19" fill="url(#gScr)" stroke="#B4C9E6" stroke-width="1"/>
<rect x="1291" y="77.5" width="13.5" height="19" fill="url(#gScr)" stroke="#B4C9E6" stroke-width="1"/>
<rect x="1291" y="96.5" width="13.5" height="20" fill="url(#gScr)" stroke="#B4C9E6" stroke-width="1"/>
<path d="M1294.8 69.5 l2.9 -3 l2.9 3 Z" fill="#A9B7CC"/>
<path d="M1294.9 86.1 h5.6 l-2.8 3 Z" fill="#5E7296"/>
<line x1="1294.5" y1="103" x2="1301" y2="103" stroke="#5E7296" stroke-width="1"/>
<path d="M1294.9 105.6 h5.6 l-2.8 3 Z" fill="#5E7296"/>
<rect x="1325.5" y="59.5" width="14" height="4.5" fill="#FFFFFF" stroke="#6F7C93" stroke-width="1"/>
<line x1="1332.5" y1="59.5" x2="1332.5" y2="64" stroke="#6F7C93" stroke-width="1"/>
<rect x="1325.5" y="74.5" width="14" height="10" fill="#FFFFFF" stroke="#6F7C93" stroke-width="1"/>
<line x1="1332.5" y1="74.5" x2="1332.5" y2="84.5" stroke="#6F7C93" stroke-width="1"/>
<line x1="1325.5" y1="79.5" x2="1339.5" y2="79.5" stroke="#6F7C93" stroke-width="1"/>
<rect x="1340.5" y="66.5" width="14" height="6" fill="#6F93E0" stroke="#3D5FB0" stroke-width="1"/>
<line x1="1347.5" y1="66.5" x2="1347.5" y2="72.5" stroke="#3D5FB0" stroke-width="1"/>
<path d="M1339 69.5 h-7 m0 0 l2.5 -2.5 m-2.5 2.5 l2.5 2.5" fill="none" stroke="#3A4A66" stroke-width="1.2"/>
<text x="1321.4" y="103.18" font-size="11.4" fill="#15428B" textLength="38.2" lengthAdjust="spacingAndGlyphs" stroke="#15428B" stroke-width="0.22">Insertar</text>
<path d="M1337.8 109.6 h5.6 l-2.8 3 Z" fill="#5A6F90"/>
<rect x="1373.5" y="59.5" width="14" height="4.5" fill="#FFFFFF" stroke="#6F7C93" stroke-width="1"/>
<line x1="1380.5" y1="59.5" x2="1380.5" y2="64" stroke="#6F7C93" stroke-width="1"/>
<rect x="1373.5" y="74.5" width="14" height="10" fill="#FFFFFF" stroke="#6F7C93" stroke-width="1"/>
<line x1="1380.5" y1="74.5" x2="1380.5" y2="84.5" stroke="#6F7C93" stroke-width="1"/>
<line x1="1373.5" y1="79.5" x2="1387.5" y2="79.5" stroke="#6F7C93" stroke-width="1"/>
<rect x="1378.5" y="66.5" width="9" height="6" fill="none" stroke="#4A5A78" stroke-width="1" stroke-dasharray="1.2 1.2"/>
<path d="M1387 65 L1396 74 M1396 65 L1387 74" fill="none" stroke="#E23B2E" stroke-width="2"/>
<text x="1365.4" y="103.18" font-size="11.4" fill="#15428B" textLength="40.6" lengthAdjust="spacingAndGlyphs" stroke="#15428B" stroke-width="0.22">Eliminar</text>
<path d="M1382.6 109.6 h5.6 l-2.8 3 Z" fill="#5A6F90"/>
<rect x="1418.5" y="62.5" width="28" height="22" fill="#FFFFFF" stroke="#8C9BB5" stroke-width="1"/>
<line x1="1425.5" y1="62.5" x2="1425.5" y2="84.5" stroke="#8C9BB5" stroke-width="1"/>
<line x1="1434.5" y1="62.5" x2="1434.5" y2="84.5" stroke="#8C9BB5" stroke-width="1"/>
<line x1="1442" y1="62.5" x2="1442" y2="84.5" stroke="#8C9BB5" stroke-width="1"/>
<line x1="1418.5" y1="67.5" x2="1446.5" y2="67.5" stroke="#8C9BB5" stroke-width="1"/>
<line x1="1418.5" y1="78" x2="1446.5" y2="78" stroke="#8C9BB5" stroke-width="1"/>
<rect x="1426" y="68" width="8" height="9.5" fill="#5F8BE8"/>
<path d="M1418.5 84.5 Q1418.5 87 1421 87 H1431 V84.5" fill="#F2F5FA" stroke="#8C9BB5" stroke-width="1"/>
<line x1="1418" y1="59.5" x2="1446" y2="59.5" stroke="#333" stroke-width="1" stroke-dasharray="1 1"/>
<path d="M1425.5 59.5 h7 m-7 0 l1.8 -1.5 m-1.8 1.5 l1.8 1.5 m5.2 -1.5 l-1.8 -1.5 m1.8 1.5 l-1.8 1.5" fill="none" stroke="#333" stroke-width="0.9"/>
<text x="1411.4" y="103.18" font-size="11.4" fill="#15428B" textLength="42.2" lengthAdjust="spacingAndGlyphs" stroke="#15428B" stroke-width="0.22">Formato</text>
<path d="M1429.6 109.6 h5.6 l-2.8 3 Z" fill="#5A6F90"/>
<text x="1473.5" y="70.5" font-size="15" fill="#111" font-weight="bold" font-family="'Liberation Serif', serif" textLength="9.5" lengthAdjust="spacingAndGlyphs">Σ</text>
<text x="1490.4" y="68.78" font-size="11.4" fill="#15428B" textLength="51.2" lengthAdjust="spacingAndGlyphs" stroke="#15428B" stroke-width="0.22">Autosuma</text>
<path d="M1546.6 63.6 h5.6 l-2.8 3 Z" fill="#5A6F90"/>
<rect x="1472.5" y="79.5" width="12.5" height="14.5" fill="url(#gFill)" stroke="#3D5A9A" stroke-width="1"/>
<rect x="1472.5" y="79.5" width="12.5" height="2.6" fill="#5E82D2"/>
<path d="M1476.8 83.5 h4 v4 h2.6 l-4.6 4.8 l-4.6 -4.8 h2.6 Z" fill="#3F6FD8" stroke="#23479C" stroke-width="0.6"/>
<text x="1490.4" y="90.98" font-size="11.4" fill="#15428B" textLength="41.6" lengthAdjust="spacingAndGlyphs" stroke="#15428B" stroke-width="0.22">Rellenar</text>
<path d="M1535.6 85.9 h5.6 l-2.8 3 Z" fill="#5A6F90"/>
<path d="M1473.5 110 L1480.5 103.5 Q1482 102.8 1483.5 104 L1485.5 106 Q1486 107.5 1485 108.5 L1479 113.8 H1475.5 Q1472.5 112 1473.5 110 Z" fill="#FAFBFD" stroke="#4A5468" stroke-width="1"/>
<line x1="1474" y1="114.5" x2="1486" y2="114.5" stroke="#111" stroke-width="1.2"/>
<text x="1490.4" y="112.78" font-size="11.4" fill="#15428B" textLength="31.6" lengthAdjust="spacingAndGlyphs" stroke="#15428B" stroke-width="0.22">Borrar</text>
<path d="M1525.6 107.6 h5.6 l-2.8 3 Z" fill="#5A6F90"/>
<text x="1564.5" y="69.5" font-size="15" fill="#2B5FB8" font-weight="bold" font-family="'Liberation Serif', serif" textLength="10.5" lengthAdjust="spacingAndGlyphs">A</text>
<text x="1565.5" y="85" font-size="15" fill="#B8363A" font-weight="bold" font-family="'Liberation Serif', serif" textLength="10" lengthAdjust="spacingAndGlyphs">Z</text>
<path d="M1575 63.5 H1594.5 L1587 72.5 V83 H1582.5 V72.5 Z" fill="url(#gFunnel)" stroke="#8A8A8A" stroke-width="0.6"/>
<text x="1558.4" y="103.18" font-size="11.4" fill="#15428B" textLength="42.2" lengthAdjust="spacingAndGlyphs" stroke="#15428B" stroke-width="0.22">Ordenar</text>
<text x="1558" y="115.88" font-size="11.4" fill="#15428B" textLength="35.6" lengthAdjust="spacingAndGlyphs" stroke="#15428B" stroke-width="0.22">y filtrar</text>
<path d="M1596.6 111.1 h5.6 l-2.8 3 Z" fill="#5A6F90"/>
<rect x="1628" y="60" width="6.5" height="5" fill="url(#gBino)" stroke="#3E4A64" stroke-width="0.6" rx="1"/>
<path d="M1627.5 65 h7.5 l2 7 v10 q0 1.5 -1.5 1.5 h-8.5 q-1.5 0 -1.5 -1.5 v-10 Z" fill="url(#gBino)" stroke="#3E4A64" stroke-width="0.6"/>
<line x1="1625.5" y1="74.5" x2="1637" y2="74.5" stroke="#E3E8F2" stroke-width="0.8"/>
<line x1="1625.5" y1="81" x2="1637" y2="81" stroke="#2E3850" stroke-width="0.8"/>
<rect x="1642.5" y="60" width="6.5" height="5" fill="url(#gBino)" stroke="#3E4A64" stroke-width="0.6" rx="1"/>
<path d="M1642 65 h7.5 l2 7 v10 q0 1.5 -1.5 1.5 h-8.5 q-1.5 0 -1.5 -1.5 v-10 Z" fill="url(#gBino)" stroke="#3E4A64" stroke-width="0.6"/>
<line x1="1640" y1="74.5" x2="1651.5" y2="74.5" stroke="#E3E8F2" stroke-width="0.8"/>
<line x1="1640" y1="81" x2="1651.5" y2="81" stroke="#2E3850" stroke-width="0.8"/>
<rect x="1636.5" y="67" width="4.5" height="5" fill="#6E7B96" stroke="#3E4A64" stroke-width="0.6"/>
<text x="1618.4" y="103.18" font-size="11.4" fill="#15428B" textLength="41.6" lengthAdjust="spacingAndGlyphs" stroke="#15428B" stroke-width="0.22">Buscar y</text>
<text x="1608" y="115.88" font-size="11.4" fill="#15428B" textLength="56" lengthAdjust="spacingAndGlyphs" stroke="#15428B" stroke-width="0.22">seleccionar</text>
<path d="M1666.8 111.1 h5.6 l-2.8 3 Z" fill="#5A6F90"/>
<g opacity="1.0">
<rect x="175.5" y="14.5" width="13" height="13.5" fill="#EDEFF2" stroke="#50565F" stroke-width="1" rx="2"/>
<text x="182" y="25.57" font-size="11.5" fill="#22262C" text-anchor="middle">A</text>
</g>
<g opacity="1.0">
<rect x="212.5" y="14.5" width="14" height="14" fill="#EDEFF2" stroke="#50565F" stroke-width="1" rx="2"/>
<text x="219.5" y="25.82" font-size="11.5" fill="#22262C" text-anchor="middle">1</text>
</g>
<g opacity="0.45">
<rect x="240.5" y="14.5" width="13" height="14" fill="#EDEFF2" stroke="#50565F" stroke-width="1" rx="2"/>
<text x="247" y="25.82" font-size="11.5" fill="#22262C" text-anchor="middle">2</text>
</g>
<g opacity="0.45">
<rect x="271.5" y="14.5" width="14" height="14" fill="#EDEFF2" stroke="#50565F" stroke-width="1" rx="2"/>
<text x="278.5" y="25.82" font-size="11.5" fill="#22262C" text-anchor="middle">3</text>
</g>
<g opacity="1.0">
<rect x="227" y="43.5" width="14.5" height="14.5" fill="#EDEFF2" stroke="#50565F" stroke-width="1" rx="2"/>
<text x="234.25" y="55.07" font-size="11.5" fill="#22262C" text-anchor="middle">O</text>
</g>
<g opacity="1.0">
<rect x="290" y="43.5" width="14" height="14.5" fill="#EDEFF2" stroke="#50565F" stroke-width="1" rx="2"/>
<text x="297" y="55.07" font-size="11.5" fill="#22262C" text-anchor="middle">B</text>
</g>
<g opacity="1.0">
<rect x="384" y="43.5" width="14" height="14.5" fill="#EDEFF2" stroke="#50565F" stroke-width="1" rx="2"/>
<text x="391" y="55.07" font-size="11.5" fill="#22262C" text-anchor="middle">C</text>
</g>
<g opacity="1.0">
<rect x="480.5" y="43.5" width="15.5" height="14.5" fill="#EDEFF2" stroke="#50565F" stroke-width="1" rx="2"/>
<text x="488.25" y="55.07" font-size="11.5" fill="#22262C" text-anchor="middle">M</text>
</g>
<g opacity="1.0">
<rect x="549" y="43.5" width="14" height="14.5" fill="#EDEFF2" stroke="#50565F" stroke-width="1" rx="2"/>
<text x="556" y="55.07" font-size="11.5" fill="#22262C" text-anchor="middle">S</text>
</g>
<g opacity="1.0">
<rect x="611" y="43.5" width="14" height="14.5" fill="#EDEFF2" stroke="#50565F" stroke-width="1" rx="2"/>
<text x="618" y="55.07" font-size="11.5" fill="#22262C" text-anchor="middle">R</text>
</g>
<g opacity="1.0">
<rect x="671" y="43.5" width="14" height="14.5" fill="#EDEFF2" stroke="#50565F" stroke-width="1" rx="2"/>
<text x="678" y="55.07" font-size="11.5" fill="#22262C" text-anchor="middle">N</text>
</g>
</g>
<g id="sheet">
<rect x="161" y="168" width="1600" height="582" fill="#F2F2F2"/>
<rect x="185" y="168" width="1557" height="12" fill="url(#gColH)"/>
<text x="212" y="177.32" font-size="10.4" fill="#1A1A1A" text-anchor="middle" textLength="6.24" lengthAdjust="spacingAndGlyphs">A</text>
<line x1="237.5" y1="168.5" x2="237.5" y2="180" stroke="#9EB6CE" stroke-width="1"/>
<text x="284.3" y="177.32" font-size="10.4" fill="#1A1A1A" text-anchor="middle" textLength="6.24" lengthAdjust="spacingAndGlyphs">B</text>
<line x1="329.5" y1="168.5" x2="329.5" y2="180" stroke="#9EB6CE" stroke-width="1"/>
<text x="349.3" y="177.32" font-size="10.4" fill="#1A1A1A" text-anchor="middle" textLength="6.76" lengthAdjust="spacingAndGlyphs">C</text>
<line x1="367.5" y1="168.5" x2="367.5" y2="180" stroke="#9EB6CE" stroke-width="1"/>
<text x="388.3" y="177.32" font-size="10.4" fill="#1A1A1A" text-anchor="middle" textLength="6.76" lengthAdjust="spacingAndGlyphs">D</text>
<line x1="407.5" y1="168.5" x2="407.5" y2="180" stroke="#9EB6CE" stroke-width="1"/>
<text x="427.8" y="177.32" font-size="10.4" fill="#1A1A1A" text-anchor="middle" textLength="6.24" lengthAdjust="spacingAndGlyphs">E</text>
<line x1="446.5" y1="168.5" x2="446.5" y2="180" stroke="#9EB6CE" stroke-width="1"/>
<text x="476.5" y="177.32" font-size="10.4" fill="#1A1A1A" text-anchor="middle" textLength="5.72" lengthAdjust="spacingAndGlyphs">F</text>
<line x1="504.5" y1="168.5" x2="504.5" y2="180" stroke="#9EB6CE" stroke-width="1"/>
<rect x="505" y="168" width="75.7" height="12" fill="url(#gColSel)"/>
<text x="543.15" y="177.32" font-size="10.4" fill="#1A1A1A" text-anchor="middle" textLength="7.28" lengthAdjust="spacingAndGlyphs">G</text>
<line x1="580.5" y1="168.5" x2="580.5" y2="180" stroke="#9EB6CE" stroke-width="1"/>
<text x="593.05" y="177.32" font-size="10.4" fill="#1A1A1A" text-anchor="middle" textLength="6.76" lengthAdjust="spacingAndGlyphs">H</text>
<line x1="604.5" y1="168.5" x2="604.5" y2="180" stroke="#9EB6CE" stroke-width="1"/>
<text x="630.95" y="177.32" font-size="10.4" fill="#1A1A1A" text-anchor="middle" textLength="2.6" lengthAdjust="spacingAndGlyphs">I</text>
<line x1="655.5" y1="168.5" x2="655.5" y2="180" stroke="#9EB6CE" stroke-width="1"/>
<text x="675.7" y="177.32" font-size="10.4" fill="#1A1A1A" text-anchor="middle" textLength="4.68" lengthAdjust="spacingAndGlyphs">J</text>
<line x1="693.5" y1="168.5" x2="693.5" y2="180" stroke="#9EB6CE" stroke-width="1"/>
<text x="740.3" y="177.32" font-size="10.4" fill="#1A1A1A" text-anchor="middle" textLength="6.24" lengthAdjust="spacingAndGlyphs">K</text>
<line x1="785.5" y1="168.5" x2="785.5" y2="180" stroke="#9EB6CE" stroke-width="1"/>
<text x="808.65" y="177.32" font-size="10.4" fill="#1A1A1A" text-anchor="middle" textLength="5.21" lengthAdjust="spacingAndGlyphs">L</text>
<line x1="830.5" y1="168.5" x2="830.5" y2="180" stroke="#9EB6CE" stroke-width="1"/>
<text x="852.55" y="177.32" font-size="10.4" fill="#1A1A1A" text-anchor="middle" textLength="7.8" lengthAdjust="spacingAndGlyphs">M</text>
<line x1="873.5" y1="168.5" x2="873.5" y2="180" stroke="#9EB6CE" stroke-width="1"/>
<text x="894.2" y="177.32" font-size="10.4" fill="#1A1A1A" text-anchor="middle" textLength="6.76" lengthAdjust="spacingAndGlyphs">N</text>
<line x1="913.5" y1="168.5" x2="913.5" y2="180" stroke="#9EB6CE" stroke-width="1"/>
<text x="930.45" y="177.32" font-size="10.4" fill="#1A1A1A" text-anchor="middle" textLength="7.28" lengthAdjust="spacingAndGlyphs">O</text>
<line x1="945.5" y1="168.5" x2="945.5" y2="180" stroke="#9EB6CE" stroke-width="1"/>
<text x="967.45" y="177.32" font-size="10.4" fill="#1A1A1A" text-anchor="middle" textLength="6.24" lengthAdjust="spacingAndGlyphs">P</text>
<line x1="987.5" y1="168.5" x2="987.5" y2="180" stroke="#9EB6CE" stroke-width="1"/>
<text x="1009.75" y="177.32" font-size="10.4" fill="#1A1A1A" text-anchor="middle" textLength="7.28" lengthAdjust="spacingAndGlyphs">Q</text>
<line x1="1030.5" y1="168.5" x2="1030.5" y2="180" stroke="#9EB6CE" stroke-width="1"/>
<text x="1109.85" y="177.32" font-size="10.4" fill="#1A1A1A" text-anchor="middle" textLength="6.76" lengthAdjust="spacingAndGlyphs">R</text>
<line x1="1187.5" y1="168.5" x2="1187.5" y2="180" stroke="#9EB6CE" stroke-width="1"/>
<text x="1203.45" y="177.32" font-size="10.4" fill="#1A1A1A" text-anchor="middle" textLength="6.24" lengthAdjust="spacingAndGlyphs">S</text>
<line x1="1217.5" y1="168.5" x2="1217.5" y2="180" stroke="#9EB6CE" stroke-width="1"/>
<text x="1239.05" y="177.32" font-size="10.4" fill="#1A1A1A" text-anchor="middle" textLength="5.72" lengthAdjust="spacingAndGlyphs">T</text>
<line x1="1259.5" y1="168.5" x2="1259.5" y2="180" stroke="#9EB6CE" stroke-width="1"/>
<text x="1272.05" y="177.32" font-size="10.4" fill="#1A1A1A" text-anchor="middle" textLength="6.76" lengthAdjust="spacingAndGlyphs">U</text>
<line x1="1283.5" y1="168.5" x2="1283.5" y2="180" stroke="#9EB6CE" stroke-width="1"/>
<text x="1302.8" y="177.32" font-size="10.4" fill="#1A1A1A" text-anchor="middle" textLength="6.24" lengthAdjust="spacingAndGlyphs">V</text>
<line x1="1320.5" y1="168.5" x2="1320.5" y2="180" stroke="#9EB6CE" stroke-width="1"/>
<text x="1340.7" y="177.32" font-size="10.4" fill="#1A1A1A" text-anchor="middle" textLength="8.83" lengthAdjust="spacingAndGlyphs">W</text>
<line x1="1359.5" y1="168.5" x2="1359.5" y2="180" stroke="#9EB6CE" stroke-width="1"/>
<text x="1384.85" y="177.32" font-size="10.4" fill="#1A1A1A" text-anchor="middle" textLength="6.24" lengthAdjust="spacingAndGlyphs">X</text>
<line x1="1409.5" y1="168.5" x2="1409.5" y2="180" stroke="#9EB6CE" stroke-width="1"/>
<text x="1430.35" y="177.32" font-size="10.4" fill="#1A1A1A" text-anchor="middle" textLength="6.24" lengthAdjust="spacingAndGlyphs">Y</text>
<line x1="1450.5" y1="168.5" x2="1450.5" y2="180" stroke="#9EB6CE" stroke-width="1"/>
<text x="1471.3" y="177.32" font-size="10.4" fill="#1A1A1A" text-anchor="middle" textLength="5.72" lengthAdjust="spacingAndGlyphs">Z</text>
<line x1="1490.5" y1="168.5" x2="1490.5" y2="180" stroke="#9EB6CE" stroke-width="1"/>
<text x="1512.15" y="177.32" font-size="10.4" fill="#1A1A1A" text-anchor="middle" textLength="12.49" lengthAdjust="spacingAndGlyphs">AA</text>
<line x1="1531.5" y1="168.5" x2="1531.5" y2="180" stroke="#9EB6CE" stroke-width="1"/>
<text x="1553.2" y="177.32" font-size="10.4" fill="#1A1A1A" text-anchor="middle" textLength="12.49" lengthAdjust="spacingAndGlyphs">AB</text>
<line x1="1573.5" y1="168.5" x2="1573.5" y2="180" stroke="#9EB6CE" stroke-width="1"/>
<text x="1594.3" y="177.32" font-size="10.4" fill="#1A1A1A" text-anchor="middle" textLength="13" lengthAdjust="spacingAndGlyphs">AC</text>
<line x1="1613.5" y1="168.5" x2="1613.5" y2="180" stroke="#9EB6CE" stroke-width="1"/>
<text x="1635.25" y="177.32" font-size="10.4" fill="#1A1A1A" text-anchor="middle" textLength="13" lengthAdjust="spacingAndGlyphs">AD</text>
<line x1="1654.5" y1="168.5" x2="1654.5" y2="180" stroke="#9EB6CE" stroke-width="1"/>
<text x="1676.3" y="177.32" font-size="10.4" fill="#1A1A1A" text-anchor="middle" textLength="12.49" lengthAdjust="spacingAndGlyphs">AE</text>
<line x1="1696.5" y1="168.5" x2="1696.5" y2="180" stroke="#9EB6CE" stroke-width="1"/>
<text x="1717.35" y="177.32" font-size="10.4" fill="#1A1A1A" text-anchor="middle" textLength="11.96" lengthAdjust="spacingAndGlyphs">AF</text>
<line x1="1737.5" y1="168.5" x2="1737.5" y2="180" stroke="#9EB6CE" stroke-width="1"/>
<line x1="1741.5" y1="168.5" x2="1741.5" y2="180" stroke="#9EB6CE" stroke-width="1"/>
<line x1="185" y1="179.5" x2="1742" y2="179.5" stroke="#9EB6CE" stroke-width="1"/>
<rect x="161" y="168" width="24" height="12" fill="#B7CDEA"/>
<path d="M181 173 V178 H176 Z" fill="#D3E2F5"/>
<line x1="184.5" y1="168" x2="184.5" y2="180" stroke="#9EB6CE" stroke-width="1"/>
<rect x="161" y="180" width="24" height="570" fill="#E4ECF7"/>
<line x1="161" y1="191.5" x2="184" y2="191.5" stroke="#A3B9D6" stroke-width="1"/>
<text x="172.6" y="189.59" font-size="10.3" fill="#1A1A1A" text-anchor="middle" textLength="4.93" lengthAdjust="spacingAndGlyphs">1</text>
<line x1="161" y1="203.5" x2="184" y2="203.5" stroke="#A3B9D6" stroke-width="1"/>
<text x="172.6" y="201.59" font-size="10.3" fill="#1A1A1A" text-anchor="middle" textLength="4.93" lengthAdjust="spacingAndGlyphs">2</text>
<line x1="161" y1="215.5" x2="184" y2="215.5" stroke="#A3B9D6" stroke-width="1"/>
<text x="172.6" y="213.59" font-size="10.3" fill="#1A1A1A" text-anchor="middle" textLength="4.93" lengthAdjust="spacingAndGlyphs">3</text>
<line x1="161" y1="227.5" x2="184" y2="227.5" stroke="#A3B9D6" stroke-width="1"/>
<text x="172.6" y="225.59" font-size="10.3" fill="#1A1A1A" text-anchor="middle" textLength="4.93" lengthAdjust="spacingAndGlyphs">4</text>
<line x1="161" y1="239.5" x2="184" y2="239.5" stroke="#A3B9D6" stroke-width="1"/>
<text x="172.6" y="237.59" font-size="10.3" fill="#1A1A1A" text-anchor="middle" textLength="4.93" lengthAdjust="spacingAndGlyphs">5</text>
<line x1="161" y1="251.5" x2="184" y2="251.5" stroke="#A3B9D6" stroke-width="1"/>
<text x="172.6" y="249.59" font-size="10.3" fill="#1A1A1A" text-anchor="middle" textLength="4.93" lengthAdjust="spacingAndGlyphs">6</text>
<line x1="161" y1="263.5" x2="184" y2="263.5" stroke="#A3B9D6" stroke-width="1"/>
<text x="172.6" y="261.59" font-size="10.3" fill="#1A1A1A" text-anchor="middle" textLength="4.93" lengthAdjust="spacingAndGlyphs">7</text>
<line x1="161" y1="275.5" x2="184" y2="275.5" stroke="#A3B9D6" stroke-width="1"/>
<text x="172.6" y="273.59" font-size="10.3" fill="#1A1A1A" text-anchor="middle" textLength="4.93" lengthAdjust="spacingAndGlyphs">8</text>
<line x1="161" y1="287.5" x2="184" y2="287.5" stroke="#A3B9D6" stroke-width="1"/>
<text x="172.6" y="285.59" font-size="10.3" fill="#1A1A1A" text-anchor="middle" textLength="4.93" lengthAdjust="spacingAndGlyphs">9</text>
<line x1="161" y1="299.5" x2="184" y2="299.5" stroke="#A3B9D6" stroke-width="1"/>
<text x="172.6" y="297.59" font-size="10.3" fill="#1A1A1A" text-anchor="middle" textLength="8.71" lengthAdjust="spacingAndGlyphs">10</text>
<line x1="161" y1="311.5" x2="184" y2="311.5" stroke="#A3B9D6" stroke-width="1"/>
<text x="172.6" y="309.59" font-size="10.3" fill="#1A1A1A" text-anchor="middle" textLength="8.13" lengthAdjust="spacingAndGlyphs">11</text>
<line x1="161" y1="323.5" x2="184" y2="323.5" stroke="#A3B9D6" stroke-width="1"/>
<text x="172.6" y="321.59" font-size="10.3" fill="#1A1A1A" text-anchor="middle" textLength="8.71" lengthAdjust="spacingAndGlyphs">12</text>
<rect x="161" y="323.5" width="24.5" height="12" fill="url(#gRowSel)"/>
<line x1="161" y1="335.5" x2="184" y2="335.5" stroke="#A3B9D6" stroke-width="1"/>
<text x="172.6" y="333.59" font-size="10.3" fill="#1A1A1A" text-anchor="middle" textLength="8.71" lengthAdjust="spacingAndGlyphs">13</text>
<line x1="161" y1="347.5" x2="184" y2="347.5" stroke="#A3B9D6" stroke-width="1"/>
<text x="172.6" y="345.59" font-size="10.3" fill="#1A1A1A" text-anchor="middle" textLength="8.71" lengthAdjust="spacingAndGlyphs">14</text>
<line x1="161" y1="359.5" x2="184" y2="359.5" stroke="#A3B9D6" stroke-width="1"/>
<text x="172.6" y="357.59" font-size="10.3" fill="#1A1A1A" text-anchor="middle" textLength="8.71" lengthAdjust="spacingAndGlyphs">15</text>
<line x1="161" y1="371.5" x2="184" y2="371.5" stroke="#A3B9D6" stroke-width="1"/>
<text x="172.6" y="369.59" font-size="10.3" fill="#1A1A1A" text-anchor="middle" textLength="8.71" lengthAdjust="spacingAndGlyphs">16</text>
<line x1="161" y1="383.5" x2="184" y2="383.5" stroke="#A3B9D6" stroke-width="1"/>
<text x="172.6" y="381.59" font-size="10.3" fill="#1A1A1A" text-anchor="middle" textLength="8.71" lengthAdjust="spacingAndGlyphs">17</text>
<line x1="161" y1="395.5" x2="184" y2="395.5" stroke="#A3B9D6" stroke-width="1"/>
<text x="172.6" y="393.59" font-size="10.3" fill="#1A1A1A" text-anchor="middle" textLength="8.71" lengthAdjust="spacingAndGlyphs">18</text>
<line x1="161" y1="407.5" x2="184" y2="407.5" stroke="#A3B9D6" stroke-width="1"/>
<text x="172.6" y="405.59" font-size="10.3" fill="#1A1A1A" text-anchor="middle" textLength="8.71" lengthAdjust="spacingAndGlyphs">19</text>
<line x1="161" y1="419.5" x2="184" y2="419.5" stroke="#A3B9D6" stroke-width="1"/>
<text x="172.6" y="417.59" font-size="10.3" fill="#1A1A1A" text-anchor="middle" textLength="8.71" lengthAdjust="spacingAndGlyphs">20</text>
<line x1="161" y1="431.5" x2="184" y2="431.5" stroke="#A3B9D6" stroke-width="1"/>
<text x="172.6" y="429.59" font-size="10.3" fill="#1A1A1A" text-anchor="middle" textLength="8.71" lengthAdjust="spacingAndGlyphs">21</text>
<line x1="161" y1="443.5" x2="184" y2="443.5" stroke="#A3B9D6" stroke-width="1"/>
<text x="172.6" y="441.59" font-size="10.3" fill="#1A1A1A" text-anchor="middle" textLength="8.71" lengthAdjust="spacingAndGlyphs">22</text>
<line x1="161" y1="455.5" x2="184" y2="455.5" stroke="#A3B9D6" stroke-width="1"/>
<text x="172.6" y="453.59" font-size="10.3" fill="#1A1A1A" text-anchor="middle" textLength="8.71" lengthAdjust="spacingAndGlyphs">23</text>
<line x1="161" y1="467.5" x2="184" y2="467.5" stroke="#A3B9D6" stroke-width="1"/>
<text x="172.6" y="465.59" font-size="10.3" fill="#1A1A1A" text-anchor="middle" textLength="8.71" lengthAdjust="spacingAndGlyphs">24</text>
<line x1="161" y1="479.5" x2="184" y2="479.5" stroke="#A3B9D6" stroke-width="1"/>
<text x="172.6" y="477.59" font-size="10.3" fill="#1A1A1A" text-anchor="middle" textLength="8.71" lengthAdjust="spacingAndGlyphs">25</text>
<line x1="161" y1="491.5" x2="184" y2="491.5" stroke="#A3B9D6" stroke-width="1"/>
<text x="172.6" y="489.59" font-size="10.3" fill="#1A1A1A" text-anchor="middle" textLength="8.71" lengthAdjust="spacingAndGlyphs">26</text>
<line x1="161" y1="503.5" x2="184" y2="503.5" stroke="#A3B9D6" stroke-width="1"/>
<text x="172.6" y="501.59" font-size="10.3" fill="#1A1A1A" text-anchor="middle" textLength="8.71" lengthAdjust="spacingAndGlyphs">27</text>
<line x1="161" y1="515.5" x2="184" y2="515.5" stroke="#A3B9D6" stroke-width="1"/>
<text x="172.6" y="513.59" font-size="10.3" fill="#1A1A1A" text-anchor="middle" textLength="8.71" lengthAdjust="spacingAndGlyphs">28</text>
<line x1="161" y1="527.5" x2="184" y2="527.5" stroke="#A3B9D6" stroke-width="1"/>
<text x="172.6" y="525.59" font-size="10.3" fill="#1A1A1A" text-anchor="middle" textLength="8.71" lengthAdjust="spacingAndGlyphs">29</text>
<line x1="161" y1="539.5" x2="184" y2="539.5" stroke="#A3B9D6" stroke-width="1"/>
<text x="172.6" y="537.59" font-size="10.3" fill="#1A1A1A" text-anchor="middle" textLength="8.71" lengthAdjust="spacingAndGlyphs">30</text>
<line x1="161" y1="551.5" x2="184" y2="551.5" stroke="#A3B9D6" stroke-width="1"/>
<text x="172.6" y="549.59" font-size="10.3" fill="#1A1A1A" text-anchor="middle" textLength="8.71" lengthAdjust="spacingAndGlyphs">31</text>
<line x1="161" y1="563.5" x2="184" y2="563.5" stroke="#A3B9D6" stroke-width="1"/>
<text x="172.6" y="561.59" font-size="10.3" fill="#1A1A1A" text-anchor="middle" textLength="8.71" lengthAdjust="spacingAndGlyphs">32</text>
<line x1="161" y1="575.5" x2="184" y2="575.5" stroke="#A3B9D6" stroke-width="1"/>
<text x="172.6" y="573.59" font-size="10.3" fill="#1A1A1A" text-anchor="middle" textLength="8.71" lengthAdjust="spacingAndGlyphs">33</text>
<line x1="161" y1="587.5" x2="184" y2="587.5" stroke="#A3B9D6" stroke-width="1"/>
<text x="172.6" y="585.59" font-size="10.3" fill="#1A1A1A" text-anchor="middle" textLength="8.71" lengthAdjust="spacingAndGlyphs">34</text>
<line x1="161" y1="599.5" x2="184" y2="599.5" stroke="#A3B9D6" stroke-width="1"/>
<text x="172.6" y="597.59" font-size="10.3" fill="#1A1A1A" text-anchor="middle" textLength="8.71" lengthAdjust="spacingAndGlyphs">35</text>
<line x1="161" y1="611.5" x2="184" y2="611.5" stroke="#A3B9D6" stroke-width="1"/>
<text x="172.6" y="609.59" font-size="10.3" fill="#1A1A1A" text-anchor="middle" textLength="8.71" lengthAdjust="spacingAndGlyphs">36</text>
<line x1="161" y1="623.5" x2="184" y2="623.5" stroke="#A3B9D6" stroke-width="1"/>
<text x="172.6" y="621.59" font-size="10.3" fill="#1A1A1A" text-anchor="middle" textLength="8.71" lengthAdjust="spacingAndGlyphs">37</text>
<line x1="161" y1="635.5" x2="184" y2="635.5" stroke="#A3B9D6" stroke-width="1"/>
<text x="172.6" y="633.59" font-size="10.3" fill="#1A1A1A" text-anchor="middle" textLength="8.71" lengthAdjust="spacingAndGlyphs">38</text>
<line x1="161" y1="647.5" x2="184" y2="647.5" stroke="#A3B9D6" stroke-width="1"/>
<text x="172.6" y="645.59" font-size="10.3" fill="#1A1A1A" text-anchor="middle" textLength="8.71" lengthAdjust="spacingAndGlyphs">39</text>
<line x1="161" y1="659.5" x2="184" y2="659.5" stroke="#A3B9D6" stroke-width="1"/>
<text x="172.6" y="657.59" font-size="10.3" fill="#1A1A1A" text-anchor="middle" textLength="8.71" lengthAdjust="spacingAndGlyphs">40</text>
<line x1="161" y1="671.5" x2="184" y2="671.5" stroke="#A3B9D6" stroke-width="1"/>
<text x="172.6" y="669.59" font-size="10.3" fill="#1A1A1A" text-anchor="middle" textLength="8.71" lengthAdjust="spacingAndGlyphs">41</text>
<line x1="161" y1="683.5" x2="184" y2="683.5" stroke="#A3B9D6" stroke-width="1"/>
<text x="172.6" y="681.59" font-size="10.3" fill="#1A1A1A" text-anchor="middle" textLength="8.71" lengthAdjust="spacingAndGlyphs">42</text>
<line x1="161" y1="695.5" x2="184" y2="695.5" stroke="#A3B9D6" stroke-width="1"/>
<text x="172.6" y="693.59" font-size="10.3" fill="#1A1A1A" text-anchor="middle" textLength="8.71" lengthAdjust="spacingAndGlyphs">43</text>
<line x1="161" y1="707.5" x2="184" y2="707.5" stroke="#A3B9D6" stroke-width="1"/>
<text x="172.6" y="705.59" font-size="10.3" fill="#1A1A1A" text-anchor="middle" textLength="8.71" lengthAdjust="spacingAndGlyphs">44</text>
<line x1="161" y1="719.5" x2="184" y2="719.5" stroke="#A3B9D6" stroke-width="1"/>
<text x="172.6" y="717.59" font-size="10.3" fill="#1A1A1A" text-anchor="middle" textLength="8.71" lengthAdjust="spacingAndGlyphs">45</text>
<line x1="161" y1="731.5" x2="184" y2="731.5" stroke="#A3B9D6" stroke-width="1"/>
<text x="172.6" y="729.59" font-size="10.3" fill="#1A1A1A" text-anchor="middle" textLength="8.71" lengthAdjust="spacingAndGlyphs">46</text>
<line x1="161" y1="743.5" x2="184" y2="743.5" stroke="#A3B9D6" stroke-width="1"/>
<text x="172.6" y="741.59" font-size="10.3" fill="#1A1A1A" text-anchor="middle" textLength="8.71" lengthAdjust="spacingAndGlyphs">47</text>
<line x1="161" y1="755.5" x2="184" y2="755.5" stroke="#A3B9D6" stroke-width="1"/>
<text x="172.6" y="753.59" font-size="10.3" fill="#1A1A1A" text-anchor="middle" textLength="8.71" lengthAdjust="spacingAndGlyphs">48</text>
<line x1="184.5" y1="180" x2="184.5" y2="750" stroke="#C6D6EA" stroke-width="1"/>
<line x1="185.5" y1="180" x2="185.5" y2="750" stroke="#F8FAFD" stroke-width="1"/>
<rect x="1738.5" y="180" width="3.5" height="570" fill="#FAFBFD"/>
<rect x="1742" y="168" width="15.2" height="582" fill="#7FA4D8"/>
<rect x="1757" y="168" width="4" height="582" fill="#AAC7EE"/>
<rect x="1743" y="169.5" width="13" height="5.5" fill="#FFFFFF" stroke="#5A7DB8" stroke-width="1"/>
<line x1="1746" y1="171.8" x2="1753" y2="171.8" stroke="#5A7DB8" stroke-width="1"/>
<path d="M1745.5 188.5 l4 -4.5 l4 4.5 Z" fill="#3B5A96"/>
<rect x="1742.5" y="194.5" width="14" height="560" fill="url(#gThumb)" stroke="#4F6591" stroke-width="1" rx="1"/>
<line x1="1746" y1="503.5" x2="1754" y2="503.5" stroke="#5F6F8F" stroke-width="1"/>
<line x1="1746" y1="504.5" x2="1754" y2="504.5" stroke="#F2F5FA" stroke-width="1"/>
<line x1="1746" y1="505.5" x2="1754" y2="505.5" stroke="#5F6F8F" stroke-width="1"/>
<line x1="1746" y1="506.5" x2="1754" y2="506.5" stroke="#F2F5FA" stroke-width="1"/>
<line x1="1746" y1="507.5" x2="1754" y2="507.5" stroke="#5F6F8F" stroke-width="1"/>
<line x1="1746" y1="508.5" x2="1754" y2="508.5" stroke="#F2F5FA" stroke-width="1"/>
<line x1="1746" y1="509.5" x2="1754" y2="509.5" stroke="#5F6F8F" stroke-width="1"/>
<line x1="1746" y1="510.5" x2="1754" y2="510.5" stroke="#F2F5FA" stroke-width="1"/>
<rect x="234" y="187" width="199.6" height="24.5" fill="#DCE6F1"/>
<text x="334" y="202.14" font-size="11" fill="#111" text-anchor="middle" font-weight="bold" textLength="112" lengthAdjust="spacingAndGlyphs">ANÁLISIS DE VENTAS</text>
<text x="241.6" y="224.98" font-size="10" fill="#000" font-weight="bold" textLength="21" lengthAdjust="spacingAndGlyphs" stroke="#000" stroke-width="0.35">Año</text>
<text x="241.6" y="236.98" font-size="10" fill="#000" font-weight="bold" textLength="23.6" lengthAdjust="spacingAndGlyphs" stroke="#000" stroke-width="0.35">País</text>
<text x="241.6" y="248.98" font-size="10" fill="#000" font-weight="bold" textLength="36.4" lengthAdjust="spacingAndGlyphs" stroke="#000" stroke-width="0.35">Familia</text>
<clipPath id="clipC"><rect x="330" y="214" width="26.3" height="40"/></clipPath>
<clipPath id="clipE"><rect x="408" y="214" width="38.8" height="40"/></clipPath>
<text x="332.4" y="224.98" font-size="10" fill="#000" textLength="32.8" lengthAdjust="spacingAndGlyphs" clip-path="url(#clipC)">(Todas)</text>
<rect x="357" y="215.4" width="10.5" height="10.8" fill="url(#gPv)" stroke="#9AA3B2" stroke-width="1" rx="2.2"/>
<path d="M359.5 219.7 h5 l-2.5 2.8 Z" fill="#3F4654"/>
<text x="332.4" y="236.98" font-size="10" fill="#000" textLength="32.8" lengthAdjust="spacingAndGlyphs" clip-path="url(#clipC)">(Todas)</text>
<rect x="357" y="227.4" width="10.5" height="10.8" fill="url(#gPv)" stroke="#9AA3B2" stroke-width="1" rx="2.2"/>
<path d="M359.5 231.7 h5 l-2.5 2.8 Z" fill="#3F4654"/>
<text x="332.4" y="248.98" font-size="10" fill="#000" textLength="32.8" lengthAdjust="spacingAndGlyphs" clip-path="url(#clipC)">(Todas)</text>
<rect x="357" y="239.4" width="10.5" height="10.8" fill="url(#gPv)" stroke="#9AA3B2" stroke-width="1" rx="2.2"/>
<path d="M359.5 243.7 h5 l-2.5 2.8 Z" fill="#3F4654"/>
<text x="410.6" y="224.98" font-size="10" fill="#000" textLength="18.3" lengthAdjust="spacingAndGlyphs">Mes</text>
<text x="410.6" y="236.98" font-size="10" fill="#000" textLength="28.6" lengthAdjust="spacingAndGlyphs">Ciudad</text>
<text x="410.4" y="248.98" font-size="10" fill="#000" clip-path="url(#clipE)">Producto</text>
<text x="450.4" y="224.98" font-size="10" fill="#000" textLength="79.4" lengthAdjust="spacingAndGlyphs">(Varios elementos)</text>
<text x="450.4" y="236.98" font-size="10" fill="#000" textLength="32.8" lengthAdjust="spacingAndGlyphs">(Todas)</text>
<text x="450.4" y="248.98" font-size="10" fill="#000" textLength="32.8" lengthAdjust="spacingAndGlyphs">(Todas)</text>
<rect x="494" y="216" width="10.5" height="10.8" fill="url(#gPv)" stroke="#9AA3B2" stroke-width="1" rx="2.2"/>
<path d="M496 218.5 h6 l-2.3 2.6 v3 l-1.4 -1 v-2 Z" fill="#4A5160"/>
<rect x="494" y="228" width="10.5" height="10.8" fill="url(#gPv)" stroke="#9AA3B2" stroke-width="1" rx="2.2"/>
<path d="M496.5 232.3 h5 l-2.5 2.8 Z" fill="#3F4654"/>
<rect x="494" y="240" width="10.5" height="10.8" fill="url(#gPv)" stroke="#9AA3B2" stroke-width="1" rx="2.2"/>
<path d="M496.5 244.3 h5 l-2.5 2.8 Z" fill="#3F4654"/>
<rect x="516.5" y="182.5" width="169" height="28" fill="#FFFFFF" stroke="#2A7F2A" stroke-width="1.1"/>
<text x="522.4" y="194.08" font-size="8.6" fill="#000" textLength="107" lengthAdjust="spacingAndGlyphs">Esta forma representa una</text>
<rect x="736.5" y="185.5" width="508" height="29" fill="#FFFFFF" stroke="#2A7F2A" stroke-width="1.1"/>
<text x="742.4" y="197.08" font-size="8.6" fill="#000" textLength="459" lengthAdjust="spacingAndGlyphs">Esta forma representa una segmentación de datos. La segmentación de datos se admite en Excel 2010 y versiones</text>
<rect x="536" y="212" width="139" height="95.6" fill="#D9D9D9"/>
<text x="556.4" y="224.25" font-size="10.2" fill="#1A1A1A" font-weight="bold" textLength="40.2" lengthAdjust="spacing">VENTAS</text>
<line x1="578" y1="285.8" x2="664" y2="285.8" stroke="#E6E6E6" stroke-width="1"/>
<rect x="590.4" y="264.4" width="17.6" height="21.2" fill="url(#gMini)"/>
<rect x="590.4" y="264.4" width="17.6" height="21.2" fill="url(#gMiniH)"/>
<rect x="633.4" y="250.6" width="17.6" height="35" fill="url(#gMini)"/>
<rect x="633.4" y="250.6" width="17.6" height="35" fill="url(#gMiniH)"/>
<text x="600" y="240.32" font-size="7.6" fill="#1A1A1A" text-anchor="middle" font-weight="bold" textLength="18.08" lengthAdjust="spacingAndGlyphs">2016;</text>
<text x="600" y="250.32" font-size="7.6" fill="#1A1A1A" text-anchor="middle" font-weight="bold" textLength="17.69" lengthAdjust="spacingAndGlyphs">279.8</text>
<text x="600" y="260.32" font-size="7.6" fill="#1A1A1A" text-anchor="middle" font-weight="bold" textLength="7.86" lengthAdjust="spacingAndGlyphs">06</text>
<text x="642" y="226.32" font-size="7.6" fill="#1A1A1A" text-anchor="middle" font-weight="bold" textLength="18.08" lengthAdjust="spacingAndGlyphs">2017;</text>
<text x="642" y="236.32" font-size="7.6" fill="#1A1A1A" text-anchor="middle" font-weight="bold" textLength="17.69" lengthAdjust="spacingAndGlyphs">471.1</text>
<text x="642" y="246.32" font-size="7.6" fill="#1A1A1A" text-anchor="middle" font-weight="bold" textLength="7.86" lengthAdjust="spacingAndGlyphs">42</text>
<rect x="531" y="322" width="29" height="3.2" fill="#000"/>
<rect x="531" y="334" width="29" height="3.4" fill="#000"/>
<rect x="560" y="317" width="112" height="46.5" fill="#EEECE1"/>
<text x="615.6" y="344.25" font-size="11.3" fill="#111" text-anchor="middle" font-weight="bold" textLength="65" lengthAdjust="spacingAndGlyphs">DIFERENCIA</text>
<rect x="559" y="364" width="113" height="54" fill="#D9D9D9"/>
<text x="618" y="395.93" font-size="16" fill="#111" text-anchor="middle" font-weight="bold" textLength="57" lengthAdjust="spacingAndGlyphs">191.336</text>
<rect x="563.6" y="433" width="107.4" height="45.8" fill="#EEECE1"/>
<text x="616.4" y="457.25" font-size="11.3" fill="#111" text-anchor="middle" font-weight="bold" textLength="76" lengthAdjust="spacingAndGlyphs">DIFERENCIA %</text>
<rect x="563.6" y="479.4" width="107.4" height="51.2" fill="#D9D9D9"/>
<text x="617.6" y="511.46" font-size="17.5" fill="#111" text-anchor="middle" textLength="35.6" lengthAdjust="spacingAndGlyphs">68%</text>
</g>
<g id="chart1">
<rect x="190.5" y="263.5" width="340" height="202" fill="#FFFFFF" stroke="#D4D4D4" stroke-width="1"/>
<path d="M530.5 263.5 V465.5 H190.5" fill="none" stroke="#BDBDBD" stroke-width="1"/>
<text x="359.6" y="282.08" font-size="11.4" fill="#595959" text-anchor="middle" textLength="112" lengthAdjust="spacingAndGlyphs">DIFERENCIAS  VENTAS</text>
<line x1="232" y1="297.5" x2="484.5" y2="297.5" stroke="#D9D9D9" stroke-width="1"/>
<text x="222" y="300.26" font-size="8" fill="#595959" text-anchor="end" textLength="25.74" lengthAdjust="spacingAndGlyphs">100.000</text>
<line x1="232" y1="316.5" x2="484.5" y2="316.5" stroke="#D9D9D9" stroke-width="1"/>
<text x="222" y="319.26" font-size="8" fill="#595959" text-anchor="end" textLength="21.78" lengthAdjust="spacingAndGlyphs">80.000</text>
<line x1="232" y1="336.5" x2="484.5" y2="336.5" stroke="#D9D9D9" stroke-width="1"/>
<text x="222" y="339.26" font-size="8" fill="#595959" text-anchor="end" textLength="21.78" lengthAdjust="spacingAndGlyphs">60.000</text>
<line x1="232" y1="356.5" x2="484.5" y2="356.5" stroke="#D9D9D9" stroke-width="1"/>
<text x="222" y="359.26" font-size="8" fill="#595959" text-anchor="end" textLength="21.78" lengthAdjust="spacingAndGlyphs">40.000</text>
<line x1="232" y1="376.5" x2="484.5" y2="376.5" stroke="#D9D9D9" stroke-width="1"/>
<text x="222" y="379.26" font-size="8" fill="#595959" text-anchor="end" textLength="21.78" lengthAdjust="spacingAndGlyphs">20.000</text>
<line x1="232" y1="395.5" x2="484.5" y2="395.5" stroke="#D9D9D9" stroke-width="1"/>
<text x="222" y="398.26" font-size="8" fill="#595959" text-anchor="end" textLength="3.96" lengthAdjust="spacingAndGlyphs">0</text>
<line x1="232" y1="415.5" x2="484.5" y2="415.5" stroke="#D9D9D9" stroke-width="1"/>
<text x="222" y="418.26" font-size="8" fill="#E0403A" text-anchor="end" textLength="21.78" lengthAdjust="spacingAndGlyphs">20.000</text>
<line x1="232" y1="435.5" x2="484.5" y2="435.5" stroke="#D9D9D9" stroke-width="1"/>
<text x="222" y="438.26" font-size="8" fill="#E0403A" text-anchor="end" textLength="21.78" lengthAdjust="spacingAndGlyphs">40.000</text>
<line x1="232" y1="455.5" x2="484.5" y2="455.5" stroke="#D9D9D9" stroke-width="1"/>
<text x="222" y="458.26" font-size="8" fill="#E0403A" text-anchor="end" textLength="21.78" lengthAdjust="spacingAndGlyphs">60.000</text>
<rect x="253.5" y="355.5" width="12" height="40" fill="#4E81BD" stroke="#0B1220" stroke-width="1"/>
<text x="259.5" y="349.46" font-size="8" fill="#4A4A4A" text-anchor="middle" textLength="21.78" lengthAdjust="spacingAndGlyphs">41.135</text>
<rect x="295.5" y="373.5" width="12" height="22" fill="#4E81BD" stroke="#0B1220" stroke-width="1"/>
<text x="301.5" y="367.46" font-size="8" fill="#4A4A4A" text-anchor="middle" textLength="21.78" lengthAdjust="spacingAndGlyphs">22.098</text>
<rect x="337.5" y="364.5" width="12" height="31" fill="#4E81BD" stroke="#0B1220" stroke-width="1"/>
<text x="343.5" y="358.46" font-size="8" fill="#4A4A4A" text-anchor="middle" textLength="21.78" lengthAdjust="spacingAndGlyphs">32.002</text>
<rect x="378.5" y="339.5" width="12" height="56" fill="#4E81BD" stroke="#0B1220" stroke-width="1"/>
<text x="384.5" y="333.46" font-size="8" fill="#4A4A4A" text-anchor="middle" textLength="21.78" lengthAdjust="spacingAndGlyphs">57.588</text>
<rect x="420.5" y="317.5" width="12" height="78" fill="#4E81BD" stroke="#0B1220" stroke-width="1"/>
<text x="426.5" y="311.46" font-size="8" fill="#4A4A4A" text-anchor="middle" textLength="21.78" lengthAdjust="spacingAndGlyphs">79.124</text>
<text x="253.6" y="409.06" font-size="8" fill="#595959" text-anchor="middle" textLength="3.96" lengthAdjust="spacingAndGlyphs">1</text>
<text x="295.5" y="409.06" font-size="8" fill="#595959" text-anchor="middle" textLength="3.96" lengthAdjust="spacingAndGlyphs">2</text>
<text x="337.4" y="409.06" font-size="8" fill="#595959" text-anchor="middle" textLength="3.96" lengthAdjust="spacingAndGlyphs">3</text>
<text x="379.3" y="409.06" font-size="8" fill="#595959" text-anchor="middle" textLength="3.96" lengthAdjust="spacingAndGlyphs">4</text>
<text x="421.2" y="409.06" font-size="8" fill="#595959" text-anchor="middle" textLength="3.96" lengthAdjust="spacingAndGlyphs">5</text>
<text x="463.1" y="409.06" font-size="8" fill="#D9A58C" text-anchor="middle" textLength="3.96" lengthAdjust="spacingAndGlyphs">6</text>
<rect x="462.5" y="396" width="12" height="39.5" fill="#FFFFFF"/>
<path d="M462.5 396.3 V435.5 H474.5 V396.3" fill="none" stroke="#000000" stroke-width="1"/>
<text x="469" y="448.26" font-size="8" fill="#E0403A" text-anchor="middle" textLength="21.78" lengthAdjust="spacingAndGlyphs">40.610</text>
<rect x="498" y="366.5" width="4.6" height="5" fill="#D6978F"/>
<text x="504.4" y="371.46" font-size="8" fill="#595959" textLength="15.84" lengthAdjust="spacingAndGlyphs">2016</text>
<rect x="498.4" y="381.4" width="4.2" height="4.4" fill="#4E81BD" stroke="#0B1220" stroke-width="1"/>
<text x="504.4" y="386.06" font-size="8" fill="#595959" textLength="15.84" lengthAdjust="spacingAndGlyphs">2017</text>
</g>
<g id="chart2">
<rect x="190.5" y="473.5" width="364" height="215" fill="#FFFFFF" stroke="#D4D4D4" stroke-width="1"/>
<text x="372" y="492.08" font-size="11.4" fill="#595959" text-anchor="middle" textLength="89" lengthAdjust="spacingAndGlyphs">VENTAS POR MES</text>
<line x1="232" y1="506.5" x2="544" y2="506.5" stroke="#D9D9D9" stroke-width="1"/>
<text x="222" y="509.26" font-size="8" fill="#595959" text-anchor="end" textLength="25.74" lengthAdjust="spacingAndGlyphs">140.000</text>
<line x1="232" y1="526.5" x2="544" y2="526.5" stroke="#D9D9D9" stroke-width="1"/>
<text x="222" y="529.26" font-size="8" fill="#595959" text-anchor="end" textLength="25.74" lengthAdjust="spacingAndGlyphs">120.000</text>
<line x1="232" y1="545.5" x2="544" y2="545.5" stroke="#D9D9D9" stroke-width="1"/>
<text x="222" y="548.26" font-size="8" fill="#595959" text-anchor="end" textLength="25.74" lengthAdjust="spacingAndGlyphs">100.000</text>
<line x1="232" y1="565.5" x2="544" y2="565.5" stroke="#D9D9D9" stroke-width="1"/>
<text x="222" y="568.26" font-size="8" fill="#595959" text-anchor="end" textLength="21.78" lengthAdjust="spacingAndGlyphs">80.000</text>
<line x1="232" y1="584.5" x2="544" y2="584.5" stroke="#D9D9D9" stroke-width="1"/>
<text x="222" y="587.26" font-size="8" fill="#595959" text-anchor="end" textLength="21.78" lengthAdjust="spacingAndGlyphs">60.000</text>
<line x1="232" y1="603.5" x2="544" y2="603.5" stroke="#D9D9D9" stroke-width="1"/>
<text x="222" y="606.26" font-size="8" fill="#595959" text-anchor="end" textLength="21.78" lengthAdjust="spacingAndGlyphs">40.000</text>
<line x1="232" y1="623.5" x2="544" y2="623.5" stroke="#D9D9D9" stroke-width="1"/>
<text x="222" y="626.26" font-size="8" fill="#595959" text-anchor="end" textLength="21.78" lengthAdjust="spacingAndGlyphs">20.000</text>
<line x1="232" y1="642.5" x2="544" y2="642.5" stroke="#D9D9D9" stroke-width="1"/>
<text x="222" y="645.26" font-size="8" fill="#595959" text-anchor="end" textLength="3.96" lengthAdjust="spacingAndGlyphs">0</text>
<polyline fill="none" stroke="#4198AF" stroke-width="1.8" stroke-linejoin="round" points="258.6,606.4 310.5,594.4 362.4,590 414.4,610 466.4,593.4 518.4,593.4"/>
<circle cx="258.6" cy="607" r="2.5" fill="#93A7CB"/>
<circle cx="310.5" cy="595" r="2.5" fill="#93A7CB"/>
<circle cx="362.4" cy="590.6" r="2.5" fill="#93A7CB"/>
<circle cx="414.4" cy="610.6" r="2.5" fill="#93A7CB"/>
<circle cx="466.4" cy="594" r="2.5" fill="#93A7CB"/>
<circle cx="518.4" cy="594" r="2.5" fill="#93A7CB"/>
<polyline fill="none" stroke="#3B5A8C" stroke-width="1.8" stroke-linejoin="round" points="258.6,567 310.5,573 362.4,559 414.4,554.4 466.4,517.4 518.4,633.4"/>
<circle cx="258.6" cy="567.6" r="2.6" fill="#3A5F9A"/>
<circle cx="310.5" cy="573.6" r="2.6" fill="#3A5F9A"/>
<circle cx="362.4" cy="559.6" r="2.6" fill="#3A5F9A"/>
<circle cx="414.4" cy="555" r="2.6" fill="#3A5F9A"/>
<circle cx="466.4" cy="518" r="2.6" fill="#3A5F9A"/>
<circle cx="518.4" cy="634" r="2.6" fill="#3A5F9A"/>
<text x="258.6" y="655.86" font-size="8" fill="#595959" text-anchor="middle" textLength="3.96" lengthAdjust="spacingAndGlyphs">1</text>
<text x="310.5" y="655.86" font-size="8" fill="#595959" text-anchor="middle" textLength="3.96" lengthAdjust="spacingAndGlyphs">2</text>
<text x="362.4" y="655.86" font-size="8" fill="#595959" text-anchor="middle" textLength="3.96" lengthAdjust="spacingAndGlyphs">3</text>
<text x="414.4" y="655.86" font-size="8" fill="#595959" text-anchor="middle" textLength="3.96" lengthAdjust="spacingAndGlyphs">4</text>
<text x="466.4" y="655.86" font-size="8" fill="#595959" text-anchor="middle" textLength="3.96" lengthAdjust="spacingAndGlyphs">5</text>
<text x="518.4" y="655.86" font-size="8" fill="#595959" text-anchor="middle" textLength="3.96" lengthAdjust="spacingAndGlyphs">6</text>
<line x1="327" y1="672.6" x2="346.4" y2="672.6" stroke="#4198AF" stroke-width="1.7"/>
<circle cx="337" cy="672.6" r="2.5" fill="#93A7CB"/>
<text x="348.6" y="676.39" font-size="10.6" fill="#595959" textLength="23" lengthAdjust="spacingAndGlyphs">2016</text>
<line x1="377.6" y1="672.6" x2="395.6" y2="672.6" stroke="#3B5A8C" stroke-width="1.8"/>
<circle cx="386.6" cy="672.6" r="2.6" fill="#3A5F9A"/>
<text x="397.4" y="676.39" font-size="10.6" fill="#595959" textLength="22.6" lengthAdjust="spacingAndGlyphs">2017</text>
</g>
<g id="chart3">
<rect x="676.5" y="223.5" width="292" height="465" fill="#FFFFFF" stroke="#D4D4D4" stroke-width="1"/>
<text x="821.3" y="242.08" font-size="11.4" fill="#595959" text-anchor="middle" textLength="109.4" lengthAdjust="spacingAndGlyphs">VENTAS POR FAMILIA</text>
<line x1="747.5" y1="256" x2="747.5" y2="666" stroke="#D9D9D9" stroke-width="1"/>
<text x="746" y="679.86" font-size="8" fill="#595959" text-anchor="middle" textLength="3.96" lengthAdjust="spacingAndGlyphs">0</text>
<line x1="792.5" y1="256" x2="792.5" y2="666" stroke="#D9D9D9" stroke-width="1"/>
<text x="791" y="679.86" font-size="8" fill="#595959" text-anchor="middle" textLength="21.78" lengthAdjust="spacingAndGlyphs">40.000</text>
<line x1="838.5" y1="256" x2="838.5" y2="666" stroke="#D9D9D9" stroke-width="1"/>
<text x="837" y="679.86" font-size="8" fill="#595959" text-anchor="middle" textLength="21.78" lengthAdjust="spacingAndGlyphs">80.000</text>
<line x1="884.5" y1="256" x2="884.5" y2="666" stroke="#D9D9D9" stroke-width="1"/>
<text x="883" y="679.86" font-size="8" fill="#595959" text-anchor="middle" textLength="25.74" lengthAdjust="spacingAndGlyphs">120.000</text>
<rect x="747.5" y="268.3" width="137.94" height="14" fill="#4198AF"/>
<rect x="747.5" y="282.3" width="65.35" height="14.3" fill="#8DBFD3"/>
<text x="739" y="284.86" font-size="8" fill="#595959" text-anchor="end" textLength="25.73" lengthAdjust="spacingAndGlyphs">Bebidas</text>
<text x="890.44" y="278.26" font-size="8" fill="#4A4A4A" textLength="25.74" lengthAdjust="spacingAndGlyphs">120.909</text>
<text x="818.35" y="292.56" font-size="8" fill="#4A4A4A" textLength="21.78" lengthAdjust="spacingAndGlyphs">57.281</text>
<rect x="747.5" y="319.4" width="61.9" height="14" fill="#4198AF"/>
<rect x="747.5" y="333.4" width="46.08" height="14.3" fill="#8DBFD3"/>
<text x="739" y="335.96" font-size="8" fill="#595959" text-anchor="end" textLength="22.95" lengthAdjust="spacingAndGlyphs">Carnes</text>
<text x="814.4" y="329.36" font-size="8" fill="#4A4A4A" textLength="21.78" lengthAdjust="spacingAndGlyphs">54.260</text>
<text x="799.08" y="343.66" font-size="8" fill="#4A4A4A" textLength="21.78" lengthAdjust="spacingAndGlyphs">40.392</text>
<rect x="747.5" y="370.5" width="44.69" height="14" fill="#4198AF"/>
<rect x="747.5" y="384.5" width="30.98" height="14.3" fill="#8DBFD3"/>
<text x="739" y="387.06" font-size="8" fill="#595959" text-anchor="end" textLength="41.95" lengthAdjust="spacingAndGlyphs">Condimentos</text>
<text x="797.19" y="380.46" font-size="8" fill="#4A4A4A" textLength="21.78" lengthAdjust="spacingAndGlyphs">39.176</text>
<text x="783.98" y="394.76" font-size="8" fill="#4A4A4A" textLength="21.78" lengthAdjust="spacingAndGlyphs">27.152</text>
<rect x="747.5" y="421.6" width="47.5" height="14" fill="#4198AF"/>
<rect x="747.5" y="435.6" width="19.97" height="14.3" fill="#8DBFD3"/>
<text x="739" y="438.16" font-size="8" fill="#595959" text-anchor="end" textLength="50.66" lengthAdjust="spacingAndGlyphs">Frutas/Verduras</text>
<text x="800" y="431.56" font-size="8" fill="#4A4A4A" textLength="21.78" lengthAdjust="spacingAndGlyphs">41.636</text>
<text x="772.97" y="445.86" font-size="8" fill="#4A4A4A" textLength="21.78" lengthAdjust="spacingAndGlyphs">17.503</text>
<rect x="747.5" y="472.7" width="35.25" height="14" fill="#4198AF"/>
<rect x="747.5" y="486.7" width="26.62" height="14.3" fill="#8DBFD3"/>
<text x="739" y="489.26" font-size="8" fill="#595959" text-anchor="end" textLength="53.82" lengthAdjust="spacingAndGlyphs">Granos/Cereales</text>
<text x="787.75" y="482.66" font-size="8" fill="#4A4A4A" textLength="21.78" lengthAdjust="spacingAndGlyphs">30.897</text>
<text x="779.62" y="496.96" font-size="8" fill="#4A4A4A" textLength="21.78" lengthAdjust="spacingAndGlyphs">23.337</text>
<rect x="747.5" y="523.8" width="84.48" height="14" fill="#4198AF"/>
<rect x="747.5" y="537.8" width="56.56" height="14.3" fill="#8DBFD3"/>
<text x="739" y="540.36" font-size="8" fill="#595959" text-anchor="end" textLength="24.94" lengthAdjust="spacingAndGlyphs">Lácteos</text>
<text x="836.98" y="533.76" font-size="8" fill="#4A4A4A" textLength="21.78" lengthAdjust="spacingAndGlyphs">74.053</text>
<text x="809.56" y="548.06" font-size="8" fill="#4A4A4A" textLength="21.78" lengthAdjust="spacingAndGlyphs">49.577</text>
<rect x="747.5" y="574.9" width="57.45" height="14" fill="#4198AF"/>
<rect x="747.5" y="588.9" width="23.33" height="14.3" fill="#8DBFD3"/>
<text x="739" y="591.46" font-size="8" fill="#595959" text-anchor="end" textLength="54.61" lengthAdjust="spacingAndGlyphs">Pescado/Marisco</text>
<text x="809.95" y="584.86" font-size="8" fill="#4A4A4A" textLength="21.78" lengthAdjust="spacingAndGlyphs">50.361</text>
<text x="776.33" y="599.16" font-size="8" fill="#4A4A4A" textLength="21.78" lengthAdjust="spacingAndGlyphs">20.451</text>
<rect x="747.5" y="626" width="68.28" height="14" fill="#4198AF"/>
<rect x="747.5" y="640" width="50.33" height="14.3" fill="#8DBFD3"/>
<text x="739" y="642.56" font-size="8" fill="#595959" text-anchor="end" textLength="34.83" lengthAdjust="spacingAndGlyphs">Repostería</text>
<text x="820.78" y="635.96" font-size="8" fill="#4A4A4A" textLength="21.78" lengthAdjust="spacingAndGlyphs">59.850</text>
<text x="803.33" y="650.26" font-size="8" fill="#4A4A4A" textLength="21.25" lengthAdjust="spacingAndGlyphs">44.113</text>
<rect x="936" y="457" width="5" height="5.8" fill="#4198AF"/>
<text x="942.2" y="462.66" font-size="8" fill="#595959" textLength="15.84" lengthAdjust="spacingAndGlyphs">2017</text>
<rect x="936" y="472.6" width="5" height="5.6" fill="#8DBFD3"/>
<text x="942.2" y="477.66" font-size="8" fill="#595959" textLength="15.84" lengthAdjust="spacingAndGlyphs">2016</text>
</g>
<g id="chart4">
<rect x="975.5" y="225.5" width="394" height="169" fill="#FFFFFF" stroke="#D4D4D4" stroke-width="1"/>
<text x="1172" y="244.28" font-size="11.4" fill="#595959" text-anchor="middle" textLength="179.6" lengthAdjust="spacingAndGlyphs">DIFERENCIAS VENTAS POR FAMILIA</text>
<line x1="984.7" y1="259.5" x2="1323.8" y2="259.5" stroke="#D9D9D9" stroke-width="1"/>
<line x1="984.7" y1="270.5" x2="1323.8" y2="270.5" stroke="#D9D9D9" stroke-width="1"/>
<line x1="984.7" y1="281.5" x2="1323.8" y2="281.5" stroke="#D9D9D9" stroke-width="1"/>
<line x1="984.7" y1="291.5" x2="1323.8" y2="291.5" stroke="#D9D9D9" stroke-width="1"/>
<line x1="984.7" y1="302.5" x2="1323.8" y2="302.5" stroke="#D9D9D9" stroke-width="1"/>
<line x1="984.7" y1="313.5" x2="1323.8" y2="313.5" stroke="#D9D9D9" stroke-width="1"/>
<line x1="984.7" y1="324.5" x2="1323.8" y2="324.5" stroke="#D9D9D9" stroke-width="1"/>
<line x1="984.7" y1="335.5" x2="1323.8" y2="335.5" stroke="#D9D9D9" stroke-width="1"/>
<rect x="1007.4" y="265.84" width="11.6" height="69.66" fill="#8DBFD3"/>
<text x="1013.2" y="259.9" font-size="8" fill="#4A4A4A" text-anchor="middle" textLength="21.78" lengthAdjust="spacingAndGlyphs">63.628</text>
<text x="1008.3" y="347.6" font-size="8" fill="#595959" text-anchor="end" textLength="25.73" lengthAdjust="spacingAndGlyphs" transform="rotate(-45 1008.3 347.6)">Bebidas</text>
<rect x="1050" y="321.02" width="11.6" height="14.48" fill="#8DBFD3"/>
<text x="1055.8" y="315.08" font-size="8" fill="#4A4A4A" text-anchor="middle" textLength="21.78" lengthAdjust="spacingAndGlyphs">13.869</text>
<text x="1050.69" y="347.6" font-size="8" fill="#595959" text-anchor="end" textLength="22.95" lengthAdjust="spacingAndGlyphs" transform="rotate(-45 1050.69 347.6)">Carnes</text>
<rect x="1092.2" y="323.07" width="11.6" height="12.43" fill="#8DBFD3"/>
<text x="1098" y="317.13" font-size="8" fill="#4A4A4A" text-anchor="middle" textLength="21.78" lengthAdjust="spacingAndGlyphs">12.024</text>
<text x="1093.08" y="347.6" font-size="8" fill="#595959" text-anchor="end" textLength="41.95" lengthAdjust="spacingAndGlyphs" transform="rotate(-45 1093.08 347.6)">Condimentos</text>
<rect x="1134.1" y="309.64" width="11.6" height="25.86" fill="#8DBFD3"/>
<text x="1139.9" y="303.7" font-size="8" fill="#4A4A4A" text-anchor="middle" textLength="21.78" lengthAdjust="spacingAndGlyphs">24.133</text>
<text x="1135.47" y="347.6" font-size="8" fill="#595959" text-anchor="end" textLength="50.66" lengthAdjust="spacingAndGlyphs" transform="rotate(-45 1135.47 347.6)">Frutas/Verduras</text>
<rect x="1176" y="328.02" width="11.6" height="7.48" fill="#8DBFD3"/>
<text x="1181.8" y="322.08" font-size="8" fill="#4A4A4A" text-anchor="middle" textLength="17.82" lengthAdjust="spacingAndGlyphs">7.560</text>
<text x="1177.86" y="347.6" font-size="8" fill="#595959" text-anchor="end" textLength="53.82" lengthAdjust="spacingAndGlyphs" transform="rotate(-45 1177.86 347.6)">Granos/Cereales</text>
<rect x="1218" y="309.26" width="11.6" height="26.24" fill="#8DBFD3"/>
<text x="1223.8" y="303.32" font-size="8" fill="#4A4A4A" text-anchor="middle" textLength="21.78" lengthAdjust="spacingAndGlyphs">24.475</text>
<text x="1220.25" y="347.6" font-size="8" fill="#595959" text-anchor="end" textLength="24.94" lengthAdjust="spacingAndGlyphs" transform="rotate(-45 1220.25 347.6)">Lácteos</text>
<rect x="1260.2" y="303.23" width="11.6" height="32.27" fill="#8DBFD3"/>
<text x="1266" y="297.29" font-size="8" fill="#4A4A4A" text-anchor="middle" textLength="21.78" lengthAdjust="spacingAndGlyphs">29.910</text>
<text x="1262.64" y="347.6" font-size="8" fill="#595959" text-anchor="end" textLength="54.61" lengthAdjust="spacingAndGlyphs" transform="rotate(-45 1262.64 347.6)">Pescado/Marisco</text>
<rect x="1302.2" y="318.95" width="11.6" height="16.55" fill="#8DBFD3"/>
<text x="1308" y="313.01" font-size="8" fill="#4A4A4A" text-anchor="middle" textLength="21.78" lengthAdjust="spacingAndGlyphs">15.737</text>
<text x="1305.03" y="347.6" font-size="8" fill="#595959" text-anchor="end" textLength="34.83" lengthAdjust="spacingAndGlyphs" transform="rotate(-45 1305.03 347.6)">Repostería</text>
<rect x="1337.4" y="312" width="5.2" height="5" fill="#4198AF"/>
<text x="1344.3" y="317.06" font-size="8" fill="#595959" textLength="15.84" lengthAdjust="spacingAndGlyphs">2016</text>
<rect x="1337.4" y="327.2" width="5.2" height="5" fill="#8DBFD3"/>
<text x="1344.3" y="332.26" font-size="8" fill="#595959" textLength="15.84" lengthAdjust="spacingAndGlyphs">2017</text>
</g>
<g id="chart5">
<rect x="975.5" y="402.5" width="394" height="290" fill="#FFFFFF" stroke="#D4D4D4" stroke-width="1"/>
<text x="1171.4" y="421.28" font-size="11.4" fill="#595959" text-anchor="middle" textLength="138" lengthAdjust="spacingAndGlyphs">% VENTAS SOBRE EL TOTAL</text>
<line x1="1004.5" y1="435.5" x2="1323.8" y2="435.5" stroke="#D9D9D9" stroke-width="1"/>
<text x="997.8" y="438.96" font-size="8" fill="#595959" text-anchor="end" textLength="18.21" lengthAdjust="spacingAndGlyphs">100%</text>
<line x1="1004.5" y1="455.5" x2="1323.8" y2="455.5" stroke="#D9D9D9" stroke-width="1"/>
<text x="997.8" y="458.96" font-size="8" fill="#595959" text-anchor="end" textLength="14.25" lengthAdjust="spacingAndGlyphs">90%</text>
<line x1="1004.5" y1="475.5" x2="1323.8" y2="475.5" stroke="#D9D9D9" stroke-width="1"/>
<text x="997.8" y="478.96" font-size="8" fill="#595959" text-anchor="end" textLength="14.25" lengthAdjust="spacingAndGlyphs">80%</text>
<line x1="1004.5" y1="495.5" x2="1323.8" y2="495.5" stroke="#D9D9D9" stroke-width="1"/>
<text x="997.8" y="498.96" font-size="8" fill="#595959" text-anchor="end" textLength="14.25" lengthAdjust="spacingAndGlyphs">70%</text>
<line x1="1004.5" y1="515.5" x2="1323.8" y2="515.5" stroke="#D9D9D9" stroke-width="1"/>
<text x="997.8" y="518.96" font-size="8" fill="#595959" text-anchor="end" textLength="14.25" lengthAdjust="spacingAndGlyphs">60%</text>
<line x1="1004.5" y1="535.5" x2="1323.8" y2="535.5" stroke="#D9D9D9" stroke-width="1"/>
<text x="997.8" y="538.96" font-size="8" fill="#595959" text-anchor="end" textLength="14.25" lengthAdjust="spacingAndGlyphs">50%</text>
<line x1="1004.5" y1="555.5" x2="1323.8" y2="555.5" stroke="#D9D9D9" stroke-width="1"/>
<text x="997.8" y="558.96" font-size="8" fill="#595959" text-anchor="end" textLength="14.25" lengthAdjust="spacingAndGlyphs">40%</text>
<line x1="1004.5" y1="575.5" x2="1323.8" y2="575.5" stroke="#D9D9D9" stroke-width="1"/>
<text x="997.8" y="578.96" font-size="8" fill="#595959" text-anchor="end" textLength="14.25" lengthAdjust="spacingAndGlyphs">30%</text>
<line x1="1004.5" y1="595.5" x2="1323.8" y2="595.5" stroke="#D9D9D9" stroke-width="1"/>
<text x="997.8" y="598.96" font-size="8" fill="#595959" text-anchor="end" textLength="14.25" lengthAdjust="spacingAndGlyphs">20%</text>
<line x1="1004.5" y1="614.5" x2="1323.8" y2="614.5" stroke="#D9D9D9" stroke-width="1"/>
<text x="997.8" y="617.96" font-size="8" fill="#595959" text-anchor="end" textLength="14.25" lengthAdjust="spacingAndGlyphs">10%</text>
<line x1="1004.5" y1="634.5" x2="1323.8" y2="634.5" stroke="#D9D9D9" stroke-width="1"/>
<text x="997.8" y="637.96" font-size="8" fill="#595959" text-anchor="end" textLength="10.29" lengthAdjust="spacingAndGlyphs">0%</text>
<rect x="1014.3" y="435.5" width="25" height="111.7" fill="#93A9CF"/>
<rect x="1014.3" y="547.2" width="25" height="87.2" fill="#4472A8"/>
<text x="1026" y="494.16" font-size="8" fill="#4A4A4A" text-anchor="middle" textLength="14.25" lengthAdjust="spacingAndGlyphs">26%</text>
<text x="1026" y="594.16" font-size="8" fill="#2F3B50" text-anchor="middle" textLength="14.25" lengthAdjust="spacingAndGlyphs">20%</text>
<text x="1026.76" y="646.6" font-size="8" fill="#595959" text-anchor="end" textLength="25.73" lengthAdjust="spacingAndGlyphs" transform="rotate(-45 1026.76 646.6)">Bebidas</text>
<rect x="1053.4" y="435.5" width="25" height="88.5" fill="#93A9CF"/>
<rect x="1053.4" y="524" width="25" height="110.4" fill="#4472A8"/>
<text x="1065.1" y="483.06" font-size="8" fill="#4A4A4A" text-anchor="middle" textLength="14.25" lengthAdjust="spacingAndGlyphs">12%</text>
<text x="1065.1" y="583.06" font-size="8" fill="#2F3B50" text-anchor="middle" textLength="14.25" lengthAdjust="spacingAndGlyphs">14%</text>
<text x="1066.68" y="646.6" font-size="8" fill="#595959" text-anchor="end" textLength="22.95" lengthAdjust="spacingAndGlyphs" transform="rotate(-45 1066.68 646.6)">Carnes</text>
<rect x="1093.2" y="435.5" width="25" height="92.7" fill="#93A9CF"/>
<rect x="1093.2" y="528.2" width="25" height="106.2" fill="#4472A8"/>
<text x="1104.9" y="484.76" font-size="8" fill="#4A4A4A" text-anchor="middle" textLength="10.29" lengthAdjust="spacingAndGlyphs">8%</text>
<text x="1104.9" y="583.76" font-size="8" fill="#2F3B50" text-anchor="middle" textLength="14.25" lengthAdjust="spacingAndGlyphs">10%</text>
<text x="1106.6" y="646.6" font-size="8" fill="#595959" text-anchor="end" textLength="41.95" lengthAdjust="spacingAndGlyphs" transform="rotate(-45 1106.6 646.6)">Condimentos</text>
<rect x="1132.4" y="435.5" width="25" height="116.4" fill="#93A9CF"/>
<rect x="1132.4" y="551.9" width="25" height="82.5" fill="#4472A8"/>
<text x="1144.1" y="496.86" font-size="8" fill="#4A4A4A" text-anchor="middle" textLength="10.29" lengthAdjust="spacingAndGlyphs">9%</text>
<text x="1144.1" y="597.06" font-size="8" fill="#2F3B50" text-anchor="middle" textLength="10.29" lengthAdjust="spacingAndGlyphs">6%</text>
<text x="1146.52" y="646.6" font-size="8" fill="#595959" text-anchor="end" textLength="50.66" lengthAdjust="spacingAndGlyphs" transform="rotate(-45 1146.52 646.6)">Frutas/Verduras</text>
<rect x="1172.1" y="435.5" width="25" height="88.5" fill="#93A9CF"/>
<rect x="1172.1" y="524" width="25" height="110.4" fill="#4472A8"/>
<text x="1183.8" y="483.06" font-size="8" fill="#4A4A4A" text-anchor="middle" textLength="10.29" lengthAdjust="spacingAndGlyphs">7%</text>
<text x="1183.8" y="581.76" font-size="8" fill="#2F3B50" text-anchor="middle" textLength="10.29" lengthAdjust="spacingAndGlyphs">8%</text>
<text x="1186.44" y="646.6" font-size="8" fill="#595959" text-anchor="end" textLength="53.82" lengthAdjust="spacingAndGlyphs" transform="rotate(-45 1186.44 646.6)">Granos/Cereales</text>
<rect x="1212" y="435.5" width="25" height="93.7" fill="#93A9CF"/>
<rect x="1212" y="529.2" width="25" height="105.2" fill="#4472A8"/>
<text x="1223.7" y="485.46" font-size="8" fill="#4A4A4A" text-anchor="middle" textLength="14.25" lengthAdjust="spacingAndGlyphs">16%</text>
<text x="1223.7" y="584.76" font-size="8" fill="#2F3B50" text-anchor="middle" textLength="14.25" lengthAdjust="spacingAndGlyphs">18%</text>
<text x="1226.36" y="646.6" font-size="8" fill="#595959" text-anchor="end" textLength="24.94" lengthAdjust="spacingAndGlyphs" transform="rotate(-45 1226.36 646.6)">Lácteos</text>
<rect x="1251.4" y="435.5" width="25" height="118.6" fill="#93A9CF"/>
<rect x="1251.4" y="554.1" width="25" height="80.3" fill="#4472A8"/>
<text x="1263.1" y="497.86" font-size="8" fill="#4A4A4A" text-anchor="middle" textLength="13.72" lengthAdjust="spacingAndGlyphs">11%</text>
<text x="1263.1" y="597.86" font-size="8" fill="#2F3B50" text-anchor="middle" textLength="10.29" lengthAdjust="spacingAndGlyphs">7%</text>
<text x="1266.28" y="646.6" font-size="8" fill="#595959" text-anchor="end" textLength="54.61" lengthAdjust="spacingAndGlyphs" transform="rotate(-45 1266.28 646.6)">Pescado/Marisco</text>
<rect x="1291.2" y="435.5" width="25" height="89.5" fill="#93A9CF"/>
<rect x="1291.2" y="525" width="25" height="109.4" fill="#4472A8"/>
<text x="1302.9" y="483.06" font-size="8" fill="#4A4A4A" text-anchor="middle" textLength="14.25" lengthAdjust="spacingAndGlyphs">13%</text>
<text x="1302.9" y="583.06" font-size="8" fill="#2F3B50" text-anchor="middle" textLength="14.25" lengthAdjust="spacingAndGlyphs">16%</text>
<text x="1306.2" y="646.6" font-size="8" fill="#595959" text-anchor="end" textLength="34.83" lengthAdjust="spacingAndGlyphs" transform="rotate(-45 1306.2 646.6)">Repostería</text>
<rect x="1337.4" y="550" width="5.2" height="5" fill="#93A9CF"/>
<text x="1344.3" y="555.06" font-size="8" fill="#595959" textLength="15.84" lengthAdjust="spacingAndGlyphs">2017</text>
<rect x="1337.4" y="565.2" width="5.2" height="5" fill="#4472A8"/>
<text x="1344.3" y="570.26" font-size="8" fill="#595959" textLength="15.84" lengthAdjust="spacingAndGlyphs">2016</text>
</g>
</svg>
</body></html>
